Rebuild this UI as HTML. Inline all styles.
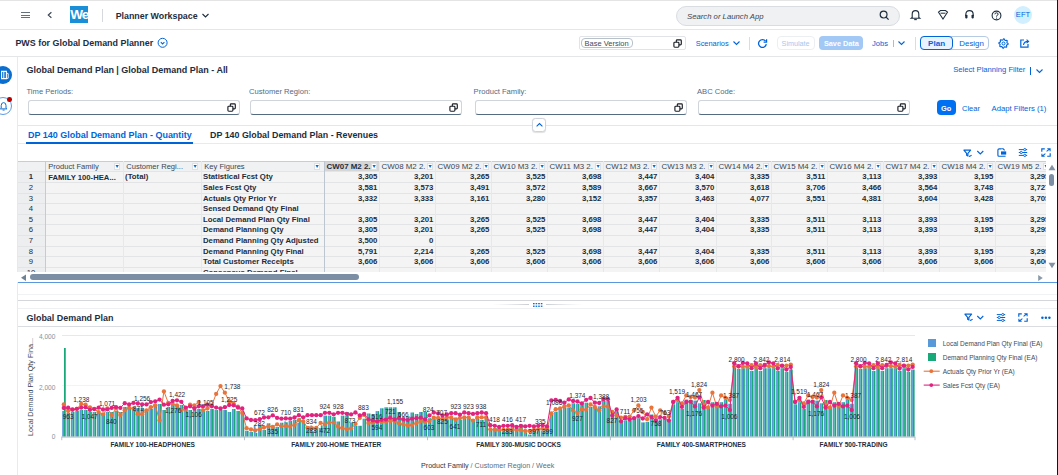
<!DOCTYPE html>
<html><head><meta charset="utf-8"><style>
html,body{margin:0;padding:0;}
body{width:1058px;height:475px;overflow:hidden;position:relative;background:#fff;font-family:"Liberation Sans", sans-serif;}
.t{position:absolute;white-space:nowrap;font-family:"Liberation Sans", sans-serif;}
svg{overflow:visible}
</style></head><body>
<div style="position:absolute;left:0px;top:0px;width:1058px;height:1px;background:#e4e4e4"></div>
<div style="position:absolute;left:0px;top:29px;width:1058px;height:1px;background:#e4e6e8"></div>
<div style="position:absolute;left:21px;top:11.8px;width:8.8px;height:1.2px;background:#66707b"></div>
<div style="position:absolute;left:21px;top:14.6px;width:8.8px;height:1.2px;background:#66707b"></div>
<div style="position:absolute;left:21px;top:17.3px;width:8.8px;height:1.2px;background:#66707b"></div>
<svg style="position:absolute;left:46px;top:11px;" width="8" height="9" viewBox="0 0 8 9"><path d="M5.4 1.3 L2.3 4.1 L5.4 6.8" fill="none" stroke="#3c4652" stroke-width="1.2"/></svg>
<div style="position:absolute;left:70px;top:6px;width:18px;height:17px;background:#1a8fd8;overflow:hidden"><div class="t" style="left:0.3px;top:0px;font-size:13.5px;line-height:17px;color:#fff;letter-spacing:-1px;font-weight:bold">We</div></div>
<div style="position:absolute;left:102px;top:8.5px;width:1px;height:13px;background:#d5d8dc"></div>
<div class="t" style="left:115.7px;top:9.80px;font-size:8.85px;line-height:12.39px;color:#1d2d3e;font-weight:bold;font-style:normal;">Planner Workspace</div>
<svg style="position:absolute;left:201px;top:12px;" width="9" height="7" viewBox="0 0 9 7"><path d="M1.5 2 L4.5 5 L7.5 2" fill="none" stroke="#1d2d3e" stroke-width="1.1"/></svg>
<div style="position:absolute;left:676px;top:6px;width:224px;height:19.5px;background:#eff1f2;border:1px solid #d9dde1;border-radius:10px;box-sizing:border-box"></div>
<div class="t" style="left:687px;top:11.69px;font-size:7.73px;line-height:10.82px;color:#3a4756;font-weight:normal;font-style:italic;">Search or Launch App</div>
<svg style="position:absolute;left:879px;top:10px;" width="11" height="11" viewBox="0 0 11 11"><circle cx="4.6" cy="4.6" r="3.4" fill="none" stroke="#1d2d3e" stroke-width="1.2"/><path d="M7.1 7.1 L9.6 9.6" stroke="#1d2d3e" stroke-width="1.3"/></svg>
<svg style="position:absolute;left:910px;top:9px;" width="11" height="12" viewBox="0 0 11 12"><path d="M2.2 8.5 L2.2 5.2 Q2.2 1.6 5.5 1.6 Q8.8 1.6 8.8 5.2 L8.8 8.5 L9.8 9.3 L1.2 9.3 Z" fill="none" stroke="#1d2d3e" stroke-width="1.1"/><path d="M4.2 10.6 L6.8 10.6" stroke="#1d2d3e" stroke-width="1.1"/></svg>
<svg style="position:absolute;left:937px;top:9px;" width="12" height="12" viewBox="0 0 12 12"><path d="M1.5 3.2 L3.5 1.5 L8.5 1.5 L10.5 3.2 L6 10 Z" fill="none" stroke="#1d2d3e" stroke-width="1.1"/><path d="M3.5 4.2 L8.5 4.2" stroke="#1d2d3e" stroke-width="1"/></svg>
<svg style="position:absolute;left:964px;top:9px;" width="11" height="12" viewBox="0 0 11 12"><path d="M1.8 7 L1.8 5.5 Q1.8 1.6 5.5 1.6 Q9.2 1.6 9.2 5.5 L9.2 7" fill="none" stroke="#1d2d3e" stroke-width="1.1"/><rect x="1.2" y="5.8" width="2.3" height="3.6" rx="0.8" fill="#1d2d3e"/><rect x="7.5" y="5.8" width="2.3" height="3.6" rx="0.8" fill="#1d2d3e"/></svg>
<svg style="position:absolute;left:990.5px;top:9.5px;" width="11" height="11" viewBox="0 0 11 11"><circle cx="5.5" cy="5.5" r="4.4" fill="none" stroke="#1d2d3e" stroke-width="1.1"/><path d="M3.9 4.3 Q3.9 2.8 5.5 2.8 Q7.1 2.8 7.1 4.2 Q7.1 5.2 5.6 5.8 L5.6 6.6" fill="none" stroke="#1d2d3e" stroke-width="1"/><circle cx="5.6" cy="8.1" r="0.6" fill="#1d2d3e"/></svg>
<div style="position:absolute;left:1014px;top:6px;width:18px;height:18px;background:#d1efff;border-radius:50%"></div>
<div class="t" style="left:1023px;transform:translateX(-50%);top:10.48px;font-size:7.6px;line-height:10.64px;color:#0064d9;font-weight:normal;font-style:normal;">EFT</div>
<div style="position:absolute;left:0px;top:56px;width:1058px;height:1px;background:#e4e6e8"></div>
<div class="t" style="left:15.4px;top:37.05px;font-size:8.93px;line-height:12.50px;color:#1d2d3e;font-weight:bold;font-style:normal;">PWS for Global Demand Planner</div>
<svg style="position:absolute;left:157px;top:37px;" width="12" height="12" viewBox="0 0 12 12"><circle cx="5.6" cy="5.8" r="4.5" fill="none" stroke="#0064d9" stroke-width="1"/><path d="M3.8 5.2 L5.6 6.9 L7.4 5.2" fill="none" stroke="#0064d9" stroke-width="1.1"/></svg>
<div style="position:absolute;left:579px;top:36.3px;width:106.7px;height:13.5px;background:#fff;border:1px solid #e0e4e8;border-radius:2px;box-sizing:border-box"></div>
<div style="position:absolute;left:581.3px;top:38px;width:52px;height:10px;background:#fff;border:1px solid #b8c0c8;border-radius:4px;box-sizing:border-box"></div>
<div class="t" style="left:584.6px;top:38.97px;font-size:7.47px;line-height:10.46px;color:#3b4c5c;font-weight:normal;font-style:normal;">Base Version</div>
<svg style="position:absolute;left:672.8px;top:38.6px;" width="10" height="10" viewBox="0 0 10 10"><rect x="3.3" y="0.9" width="5" height="5" rx="0.9" fill="none" stroke="#1a1f26" stroke-width="1.15"/><rect x="0.9" y="3.2" width="5" height="5" rx="0.9" fill="#fff" stroke="#1a1f26" stroke-width="1.15"/></svg>
<div class="t" style="left:695.7px;top:39.01px;font-size:7.42px;line-height:10.39px;color:#0064d9;font-weight:normal;font-style:normal;">Scenarios</div>
<svg style="position:absolute;left:732px;top:39px;" width="9" height="8" viewBox="0 0 9 8"><path d="M1.5 2.5 L4.5 5.5 L7.5 2.5" fill="none" stroke="#0064d9" stroke-width="1.1"/></svg>
<div style="position:absolute;left:748.5px;top:36.5px;width:1px;height:13px;background:#d9dde1"></div>
<svg style="position:absolute;left:757px;top:37.5px;" width="11" height="11" viewBox="0 0 11 11"><path d="M8.6 3.2 A3.9 3.9 0 1 0 9.3 6.2" fill="none" stroke="#0064d9" stroke-width="1.3"/><path d="M9.6 1.2 L9.6 4.2 L6.6 4.2" fill="none" stroke="#0064d9" stroke-width="1.2"/></svg>
<div style="position:absolute;left:776.8px;top:36.2px;width:37.8px;height:13.6px;border:1px solid #eceff2;border-radius:4px;box-sizing:border-box"></div>
<div class="t" style="left:781.6px;top:39.16px;font-size:7.2px;line-height:10.08px;color:#a8c7ee;font-weight:normal;font-style:normal;">Simulate</div>
<div style="position:absolute;left:819.4px;top:36.2px;width:44px;height:13.6px;background:#a2c8f6;border-radius:4px"></div>
<div class="t" style="left:841.4px;transform:translateX(-50%);top:39.08px;font-size:7.32px;line-height:10.25px;color:#fff;font-weight:bold;font-style:normal;">Save Data</div>
<div class="t" style="left:872px;top:38.90px;font-size:7.57px;line-height:10.60px;color:#0064d9;font-weight:normal;font-style:normal;">Jobs</div>
<div style="position:absolute;left:892.8px;top:39.5px;width:0.8px;height:7px;background:#9fbfe8"></div>
<svg style="position:absolute;left:897px;top:39px;" width="9" height="8" viewBox="0 0 9 8"><path d="M1.5 2.5 L4.5 5.5 L7.5 2.5" fill="none" stroke="#0064d9" stroke-width="1.1"/></svg>
<div style="position:absolute;left:914.7px;top:36.5px;width:1px;height:13px;background:#d9dde1"></div>
<div style="position:absolute;left:919.7px;top:36px;width:69.6px;height:14px;border:1px solid #b5cbe3;border-radius:4px;box-sizing:border-box"></div>
<div style="position:absolute;left:919.7px;top:36px;width:33.8px;height:14px;background:#e8f2ff;border:1px solid #0064d9;border-radius:4px;box-sizing:border-box"></div>
<div class="t" style="left:936.6px;transform:translateX(-50%);top:37.87px;font-size:8.05px;line-height:11.27px;color:#0064d9;font-weight:bold;font-style:normal;">Plan</div>
<div class="t" style="left:971.6px;transform:translateX(-50%);top:37.97px;font-size:7.9px;line-height:11.06px;color:#0064d9;font-weight:normal;font-style:normal;">Design</div>
<svg style="position:absolute;left:998px;top:37.5px;" width="11" height="11" viewBox="0 0 11 11"><path d="M5.50 0.90 L6.40 0.99 L6.88 2.17 L7.50 2.51 L8.75 2.25 L9.32 2.94 L8.83 4.12 L9.03 4.80 L10.10 5.50 L10.01 6.40 L8.83 6.88 L8.49 7.50 L8.75 8.75 L8.06 9.32 L6.88 8.83 L6.20 9.03 L5.50 10.10 L4.60 10.01 L4.12 8.83 L3.50 8.49 L2.25 8.75 L1.68 8.06 L2.17 6.88 L1.97 6.20 L0.90 5.50 L0.99 4.60 L2.17 4.12 L2.51 3.50 L2.25 2.25 L2.94 1.68 L4.12 2.17 L4.80 1.97 Z" fill="none" stroke="#0064d9" stroke-width="1.1" stroke-linejoin="round"/><circle cx="5.5" cy="5.5" r="1.5" fill="none" stroke="#0064d9" stroke-width="1"/></svg>
<svg style="position:absolute;left:1019px;top:37.5px;" width="11" height="11" viewBox="0 0 11 11"><path d="M5 2 L1.8 2 L1.8 9.2 L9 9.2 L9 6" fill="none" stroke="#0064d9" stroke-width="1.2"/><path d="M4.5 7 Q5 3.5 9.2 3.4" fill="none" stroke="#0064d9" stroke-width="1.1"/><path d="M7.6 1.6 L9.6 3.4 L7.6 5.2" fill="none" stroke="#0064d9" stroke-width="1.1"/></svg>
<div style="position:absolute;left:16.8px;top:57px;width:0.8px;height:418px;background:#e9eaeb"></div>
<div style="position:absolute;left:-6px;top:66.1px;width:18.2px;height:18.2px;background:#0a6ed1;border-radius:50%"></div>
<svg style="position:absolute;left:0px;top:70px;" width="10" height="10" viewBox="0 0 10 10"><path d="M1.6 1.4 L6.4 1.4 L6.4 8.6 L1.6 8.6 Z" fill="none" stroke="#fff" stroke-width="1.1"/><path d="M3.8 1.6 L3.8 8.4" stroke="#fff" stroke-width="1"/><path d="M6.4 3 L8.2 3.6 L8.2 8.2 L6.4 8.6" fill="none" stroke="#fff" stroke-width="0.9"/></svg>
<div style="position:absolute;left:-6px;top:97px;width:18.2px;height:18.2px;background:#fff;border:1px solid #5a9be6;border-radius:50%;box-sizing:border-box"></div>
<svg style="position:absolute;left:-1px;top:101px;" width="10" height="10" viewBox="0 0 10 10"><path d="M2.2 7.2 L2.2 4.6 Q2.2 1.6 4.6 1.6 Q7 1.6 7 4.6 L7 7.2 L7.8 7.9 L1.4 7.9 Z" fill="none" stroke="#0a6ed1" stroke-width="1"/><path d="M3.6 9.1 L5.6 9.1" stroke="#0a6ed1" stroke-width="0.9"/></svg>
<div style="position:absolute;left:7.1px;top:97.4px;width:4.6px;height:4.6px;background:#bb0000;border-radius:50%"></div>
<div class="t" style="left:26.5px;top:64.01px;font-size:8.99px;line-height:12.59px;color:#1d2d3e;font-weight:bold;font-style:normal;">Global Demand Plan | Global Demand Plan - All</div>
<div class="t" style="left:953.2px;top:65.44px;font-size:7.65px;line-height:10.71px;color:#0064d9;font-weight:normal;font-style:normal;">Select Planning Filter</div>
<div style="position:absolute;left:1029.5px;top:66.5px;width:0.9px;height:8px;background:#0064d9"></div>
<svg style="position:absolute;left:1035px;top:66.5px;" width="9" height="8" viewBox="0 0 9 8"><path d="M1.5 2.5 L4.5 5.5 L7.5 2.5" fill="none" stroke="#0064d9" stroke-width="1.1"/></svg>
<div class="t" style="left:26.5px;top:87.37px;font-size:7.62px;line-height:10.67px;color:#556b82;font-weight:normal;font-style:normal;">Time Periods:</div>
<div style="position:absolute;left:27.5px;top:100.2px;width:212px;height:14.8px;background:#fff;border:1px solid #cfd5db;border-bottom:1px solid #556b81;border-radius:3px;box-sizing:border-box"></div>
<svg style="position:absolute;left:226.5px;top:103.2px;" width="10" height="10" viewBox="0 0 10 10"><rect x="3.3" y="0.9" width="5" height="5" rx="0.9" fill="none" stroke="#1a1f26" stroke-width="1.15"/><rect x="0.9" y="3.2" width="5" height="5" rx="0.9" fill="#fff" stroke="#1a1f26" stroke-width="1.15"/></svg>
<div class="t" style="left:249px;top:87.37px;font-size:7.62px;line-height:10.67px;color:#556b82;font-weight:normal;font-style:normal;">Customer Region:</div>
<div style="position:absolute;left:250px;top:100.2px;width:212px;height:14.8px;background:#fff;border:1px solid #cfd5db;border-bottom:1px solid #556b81;border-radius:3px;box-sizing:border-box"></div>
<svg style="position:absolute;left:449px;top:103.2px;" width="10" height="10" viewBox="0 0 10 10"><rect x="3.3" y="0.9" width="5" height="5" rx="0.9" fill="none" stroke="#1a1f26" stroke-width="1.15"/><rect x="0.9" y="3.2" width="5" height="5" rx="0.9" fill="#fff" stroke="#1a1f26" stroke-width="1.15"/></svg>
<div class="t" style="left:473.6px;top:87.37px;font-size:7.62px;line-height:10.67px;color:#556b82;font-weight:normal;font-style:normal;">Product Family:</div>
<div style="position:absolute;left:474.6px;top:100.2px;width:212px;height:14.8px;background:#fff;border:1px solid #cfd5db;border-bottom:1px solid #556b81;border-radius:3px;box-sizing:border-box"></div>
<svg style="position:absolute;left:673.6px;top:103.2px;" width="10" height="10" viewBox="0 0 10 10"><rect x="3.3" y="0.9" width="5" height="5" rx="0.9" fill="none" stroke="#1a1f26" stroke-width="1.15"/><rect x="0.9" y="3.2" width="5" height="5" rx="0.9" fill="#fff" stroke="#1a1f26" stroke-width="1.15"/></svg>
<div class="t" style="left:697px;top:87.37px;font-size:7.62px;line-height:10.67px;color:#556b82;font-weight:normal;font-style:normal;">ABC Code:</div>
<div style="position:absolute;left:698px;top:100.2px;width:212px;height:14.8px;background:#fff;border:1px solid #cfd5db;border-bottom:1px solid #556b81;border-radius:3px;box-sizing:border-box"></div>
<svg style="position:absolute;left:897px;top:103.2px;" width="10" height="10" viewBox="0 0 10 10"><rect x="3.3" y="0.9" width="5" height="5" rx="0.9" fill="none" stroke="#1a1f26" stroke-width="1.15"/><rect x="0.9" y="3.2" width="5" height="5" rx="0.9" fill="#fff" stroke="#1a1f26" stroke-width="1.15"/></svg>
<div style="position:absolute;left:936.5px;top:100.2px;width:19.3px;height:14.8px;background:#0070f2;border-radius:4px"></div>
<div class="t" style="left:946.1px;transform:translateX(-50%);top:103.62px;font-size:7.4px;line-height:10.36px;color:#fff;font-weight:bold;font-style:normal;">Go</div>
<div class="t" style="left:962px;top:103.83px;font-size:7.53px;line-height:10.54px;color:#0064d9;font-weight:normal;font-style:normal;">Clear</div>
<div class="t" style="left:991.5px;top:104.09px;font-size:7.73px;line-height:10.82px;color:#0064d9;font-weight:normal;font-style:normal;">Adapt Filters (1)</div>
<div style="position:absolute;left:17.6px;top:125px;width:1040px;height:1px;background:#e4e6e8"></div>
<div style="position:absolute;left:532.4px;top:118px;width:13.5px;height:13.5px;background:#fff;border:1px solid #cdd3da;border-radius:3.5px;box-sizing:border-box;box-shadow:0 0.5px 1px rgba(0,0,0,0.12)"></div>
<svg style="position:absolute;left:534.7px;top:121.2px;" width="9" height="8" viewBox="0 0 9 8"><path d="M1.6 5.3 L4.5 2.6 L7.4 5.3" fill="none" stroke="#0064d9" stroke-width="1.1"/></svg>
<div class="t" style="left:28px;top:128.71px;font-size:8.98px;line-height:12.57px;color:#0064d9;font-weight:bold;font-style:normal;">DP 140 Global Demand Plan - Quantity</div>
<div class="t" style="left:210px;top:128.77px;font-size:8.9px;line-height:12.46px;color:#1d2d3e;font-weight:bold;font-style:normal;">DP 140 Global Demand Plan - Revenues</div>
<div style="position:absolute;left:17.6px;top:143px;width:1040px;height:1px;background:#e8eaec"></div>
<div style="position:absolute;left:26.1px;top:141.8px;width:167px;height:2px;background:#0064d9"></div>
<svg style="position:absolute;left:962.5px;top:148.5px;" width="11" height="9" viewBox="0 0 11 9"><path d="M0.9 1.1 L7.6 1.1 L4.9 4.3 L4.9 6.9 L3.6 6.2 L3.6 4.3 Z" fill="none" stroke="#0064d9" stroke-width="1.15" stroke-linejoin="round"/><path d="M5.9 7.3 Q7 7.6 8.6 6.1" fill="none" stroke="#0064d9" stroke-width="1.1"/></svg>
<svg style="position:absolute;left:975.5px;top:148.5px;" width="9" height="7" viewBox="0 0 9 7"><path d="M1.3 2 L4.3 5 L7.3 2" fill="none" stroke="#0064d9" stroke-width="1.1"/></svg>
<svg style="position:absolute;left:996.5px;top:148px;" width="10" height="9" viewBox="0 0 10 9"><path d="M4.2 0.8 L2.2 0.8 Q0.9 0.8 0.9 2.1 L0.9 7.2 Q0.9 8.2 1.9 8.2 L8.6 8.2" fill="none" stroke="#0064d9" stroke-width="1.15"/><path d="M4.2 0.8 L6.2 0.8 L7.6 2.4" fill="none" stroke="#0064d9" stroke-width="1.1"/><rect x="4" y="3.4" width="5.2" height="3.2" fill="#0064d9"/></svg>
<svg style="position:absolute;left:1018.4px;top:148px;" width="10" height="9" viewBox="0 0 10 9"><path d="M0.8 1.6 L9.2 1.6 M0.8 4.5 L9.2 4.5 M0.8 7.4 L9.2 7.4" stroke="#0064d9" stroke-width="1"/><circle cx="6.8" cy="1.6" r="1.15" fill="#fff" stroke="#0064d9" stroke-width="0.9"/><circle cx="3.2" cy="4.5" r="1.15" fill="#fff" stroke="#0064d9" stroke-width="0.9"/><circle cx="6.8" cy="7.4" r="1.15" fill="#fff" stroke="#0064d9" stroke-width="0.9"/></svg>
<svg style="position:absolute;left:1040.8px;top:148px;" width="10" height="9" viewBox="0 0 10 9"><path d="M0.8 3.8 L0.8 0.8 L3.8 0.8 M9.2 5.2 L9.2 8.2 L6.2 8.2" fill="none" stroke="#0064d9" stroke-width="1.15"/><path d="M5.6 3.4 L8.8 0.8 M6.3 0.8 L9.1 0.8 L9.1 3.3 M4.4 5.6 L1.2 8.2 M3.7 8.2 L0.9 8.2 L0.9 5.7" fill="none" stroke="#0064d9" stroke-width="1.05"/></svg>
<div style="position:absolute;left:17px;top:161.2px;width:1029.00px;height:111.00px;overflow:hidden;background:#f4f4f4">
<div style="position:absolute;left:0.00px;top:0.00px;width:1029.00px;height:10.80px;background:#eff1f3"></div>
<div style="position:absolute;left:307.00px;top:0.00px;width:55.92px;height:10.80px;background:#d6d6d6"></div>
<div style="position:absolute;left:0.00px;top:10.80px;width:27.90px;height:200.00px;background:#eceef0"></div>
<div style="position:absolute;left:0.00px;top:0.00px;width:1029.00px;height:0.90px;background:#c9cdd1"></div>
<div style="position:absolute;left:0.00px;top:10.30px;width:1029.00px;height:0.90px;background:#e2e4e6"></div>
<div style="position:absolute;left:0.00px;top:20.90px;width:1029.00px;height:0.90px;background:#e2e4e6"></div>
<div style="position:absolute;left:0.00px;top:31.50px;width:1029.00px;height:0.90px;background:#e2e4e6"></div>
<div style="position:absolute;left:0.00px;top:42.10px;width:1029.00px;height:0.90px;background:#e2e4e6"></div>
<div style="position:absolute;left:0.00px;top:52.70px;width:1029.00px;height:0.90px;background:#e2e4e6"></div>
<div style="position:absolute;left:0.00px;top:63.30px;width:1029.00px;height:0.90px;background:#e2e4e6"></div>
<div style="position:absolute;left:0.00px;top:73.90px;width:1029.00px;height:0.90px;background:#e2e4e6"></div>
<div style="position:absolute;left:0.00px;top:84.50px;width:1029.00px;height:0.90px;background:#e2e4e6"></div>
<div style="position:absolute;left:0.00px;top:95.10px;width:1029.00px;height:0.90px;background:#e2e4e6"></div>
<div style="position:absolute;left:0.00px;top:105.70px;width:1029.00px;height:0.90px;background:#e2e4e6"></div>
<div style="position:absolute;left:0.00px;top:116.30px;width:1029.00px;height:0.90px;background:#e2e4e6"></div>
<div style="position:absolute;left:0.00px;top:0.00px;width:27.90px;height:0.90px;background:#c9cdd1"></div>
<div style="position:absolute;left:0.00px;top:0.00px;width:1.00px;height:200.00px;background:#e6e8ea"></div>
<div style="position:absolute;left:28.00px;top:0.00px;width:1.00px;height:200.00px;background:#c3ccd5"></div>
<div style="position:absolute;left:106.00px;top:0.00px;width:1.00px;height:200.00px;background:#e6e8ea"></div>
<div style="position:absolute;left:184.00px;top:0.00px;width:1.00px;height:200.00px;background:#e6e8ea"></div>
<div style="position:absolute;left:307.00px;top:0.00px;width:1.00px;height:200.00px;background:#bcc6d0"></div>
<div style="position:absolute;left:362.00px;top:0.00px;width:1.00px;height:200.00px;background:#e6e8ea"></div>
<div style="position:absolute;left:418.00px;top:0.00px;width:1.00px;height:200.00px;background:#e6e8ea"></div>
<div style="position:absolute;left:474.00px;top:0.00px;width:1.00px;height:200.00px;background:#e6e8ea"></div>
<div style="position:absolute;left:530.00px;top:0.00px;width:1.00px;height:200.00px;background:#e6e8ea"></div>
<div style="position:absolute;left:586.00px;top:0.00px;width:1.00px;height:200.00px;background:#e6e8ea"></div>
<div style="position:absolute;left:642.00px;top:0.00px;width:1.00px;height:200.00px;background:#e6e8ea"></div>
<div style="position:absolute;left:699.00px;top:0.00px;width:1.00px;height:200.00px;background:#e6e8ea"></div>
<div style="position:absolute;left:754.00px;top:0.00px;width:1.00px;height:200.00px;background:#e6e8ea"></div>
<div style="position:absolute;left:810.00px;top:0.00px;width:1.00px;height:200.00px;background:#e6e8ea"></div>
<div style="position:absolute;left:866.00px;top:0.00px;width:1.00px;height:200.00px;background:#e6e8ea"></div>
<div style="position:absolute;left:922.00px;top:0.00px;width:1.00px;height:200.00px;background:#e6e8ea"></div>
<div style="position:absolute;left:978.00px;top:0.00px;width:1.00px;height:200.00px;background:#e6e8ea"></div>
<div style="position:absolute;left:1034.00px;top:0.00px;width:1.00px;height:200.00px;background:#e6e8ea"></div>
<div class="t" style="left:31.30px;top:0.50px;font-size:7.57px;line-height:10.60px;color:#3a4654;font-weight:normal;">Product Family</div>
<div class="t" style="left:109.30px;top:0.50px;font-size:7.57px;line-height:10.60px;color:#3a4654;font-weight:normal;">Customer Regi...</div>
<div class="t" style="left:187.30px;top:0.50px;font-size:7.57px;line-height:10.60px;color:#3a4654;font-weight:normal;">Key Figures</div>
<div class="t" style="left:309.60px;top:0.26px;font-size:7.92px;line-height:11.09px;color:#1d2d3e;font-weight:bold;">CW07 M2 2.</div>
<div class="t" style="left:364.60px;top:0.26px;font-size:7.92px;line-height:11.09px;color:#3a4654;font-weight:normal;">CW08 M2 2.</div>
<div class="t" style="left:420.60px;top:0.26px;font-size:7.92px;line-height:11.09px;color:#3a4654;font-weight:normal;">CW09 M2 2.</div>
<div class="t" style="left:476.60px;top:0.26px;font-size:7.92px;line-height:11.09px;color:#3a4654;font-weight:normal;">CW10 M3 2.</div>
<div class="t" style="left:532.60px;top:0.26px;font-size:7.92px;line-height:11.09px;color:#3a4654;font-weight:normal;">CW11 M3 2.</div>
<div class="t" style="left:588.60px;top:0.26px;font-size:7.92px;line-height:11.09px;color:#3a4654;font-weight:normal;">CW12 M3 2.</div>
<div class="t" style="left:644.60px;top:0.26px;font-size:7.92px;line-height:11.09px;color:#3a4654;font-weight:normal;">CW13 M3 2.</div>
<div class="t" style="left:701.60px;top:0.26px;font-size:7.92px;line-height:11.09px;color:#3a4654;font-weight:normal;">CW14 M4 2.</div>
<div class="t" style="left:756.60px;top:0.26px;font-size:7.92px;line-height:11.09px;color:#3a4654;font-weight:normal;">CW15 M4 2.</div>
<div class="t" style="left:812.60px;top:0.26px;font-size:7.92px;line-height:11.09px;color:#3a4654;font-weight:normal;">CW16 M4 2.</div>
<div class="t" style="left:868.60px;top:0.26px;font-size:7.92px;line-height:11.09px;color:#3a4654;font-weight:normal;">CW17 M4 2.</div>
<div class="t" style="left:924.60px;top:0.26px;font-size:7.92px;line-height:11.09px;color:#3a4654;font-weight:normal;">CW18 M4 2.</div>
<div class="t" style="left:980.60px;top:0.26px;font-size:7.92px;line-height:11.09px;color:#3a4654;font-weight:normal;">CW19 M5 2.</div>
<div style="position:absolute;left:96.70px;top:2.30px;width:6.30px;height:6.30px;background:#fff;border:0.5px solid #dde1e5;box-sizing:border-box"></div>
<svg style="position:absolute;left:96.70px;top:2.3px" width="6.3" height="6.3" viewBox="0 0 6.3 6.3"><path d="M1.5 2.1 L4.8 2.1 L3.15 5.0 Z" fill="#0a6ed1"/></svg>
<div style="position:absolute;left:174.70px;top:2.30px;width:6.30px;height:6.30px;background:#fff;border:0.5px solid #dde1e5;box-sizing:border-box"></div>
<svg style="position:absolute;left:174.70px;top:2.3px" width="6.3" height="6.3" viewBox="0 0 6.3 6.3"><path d="M1.5 2.1 L4.8 2.1 L3.15 5.0 Z" fill="#0a6ed1"/></svg>
<div style="position:absolute;left:297.20px;top:2.30px;width:6.30px;height:6.30px;background:#fff;border:0.5px solid #dde1e5;box-sizing:border-box"></div>
<svg style="position:absolute;left:297.20px;top:2.3px" width="6.3" height="6.3" viewBox="0 0 6.3 6.3"><path d="M1.5 2.1 L4.8 2.1 L3.15 5.0 Z" fill="#0a6ed1"/></svg>
<div style="position:absolute;left:353.70px;top:2.30px;width:6.30px;height:6.30px;background:#fff;border:0.5px solid #dde1e5;box-sizing:border-box"></div>
<svg style="position:absolute;left:353.70px;top:2.3px" width="6.3" height="6.3" viewBox="0 0 6.3 6.3"><path d="M1.5 2.1 L4.8 2.1 L3.15 5.0 Z" fill="#0a6ed1"/></svg>
<div style="position:absolute;left:409.70px;top:2.30px;width:6.30px;height:6.30px;background:#fff;border:0.5px solid #dde1e5;box-sizing:border-box"></div>
<svg style="position:absolute;left:409.70px;top:2.3px" width="6.3" height="6.3" viewBox="0 0 6.3 6.3"><path d="M1.5 2.1 L4.8 2.1 L3.15 5.0 Z" fill="#0a6ed1"/></svg>
<div style="position:absolute;left:465.70px;top:2.30px;width:6.30px;height:6.30px;background:#fff;border:0.5px solid #dde1e5;box-sizing:border-box"></div>
<svg style="position:absolute;left:465.70px;top:2.3px" width="6.3" height="6.3" viewBox="0 0 6.3 6.3"><path d="M1.5 2.1 L4.8 2.1 L3.15 5.0 Z" fill="#0a6ed1"/></svg>
<div style="position:absolute;left:521.70px;top:2.30px;width:6.30px;height:6.30px;background:#fff;border:0.5px solid #dde1e5;box-sizing:border-box"></div>
<svg style="position:absolute;left:521.70px;top:2.3px" width="6.3" height="6.3" viewBox="0 0 6.3 6.3"><path d="M1.5 2.1 L4.8 2.1 L3.15 5.0 Z" fill="#0a6ed1"/></svg>
<div style="position:absolute;left:577.70px;top:2.30px;width:6.30px;height:6.30px;background:#fff;border:0.5px solid #dde1e5;box-sizing:border-box"></div>
<svg style="position:absolute;left:577.70px;top:2.3px" width="6.3" height="6.3" viewBox="0 0 6.3 6.3"><path d="M1.5 2.1 L4.8 2.1 L3.15 5.0 Z" fill="#0a6ed1"/></svg>
<div style="position:absolute;left:633.70px;top:2.30px;width:6.30px;height:6.30px;background:#fff;border:0.5px solid #dde1e5;box-sizing:border-box"></div>
<svg style="position:absolute;left:633.70px;top:2.3px" width="6.3" height="6.3" viewBox="0 0 6.3 6.3"><path d="M1.5 2.1 L4.8 2.1 L3.15 5.0 Z" fill="#0a6ed1"/></svg>
<div style="position:absolute;left:690.70px;top:2.30px;width:6.30px;height:6.30px;background:#fff;border:0.5px solid #dde1e5;box-sizing:border-box"></div>
<svg style="position:absolute;left:690.70px;top:2.3px" width="6.3" height="6.3" viewBox="0 0 6.3 6.3"><path d="M1.5 2.1 L4.8 2.1 L3.15 5.0 Z" fill="#0a6ed1"/></svg>
<div style="position:absolute;left:745.70px;top:2.30px;width:6.30px;height:6.30px;background:#fff;border:0.5px solid #dde1e5;box-sizing:border-box"></div>
<svg style="position:absolute;left:745.70px;top:2.3px" width="6.3" height="6.3" viewBox="0 0 6.3 6.3"><path d="M1.5 2.1 L4.8 2.1 L3.15 5.0 Z" fill="#0a6ed1"/></svg>
<div style="position:absolute;left:801.70px;top:2.30px;width:6.30px;height:6.30px;background:#fff;border:0.5px solid #dde1e5;box-sizing:border-box"></div>
<svg style="position:absolute;left:801.70px;top:2.3px" width="6.3" height="6.3" viewBox="0 0 6.3 6.3"><path d="M1.5 2.1 L4.8 2.1 L3.15 5.0 Z" fill="#0a6ed1"/></svg>
<div style="position:absolute;left:857.70px;top:2.30px;width:6.30px;height:6.30px;background:#fff;border:0.5px solid #dde1e5;box-sizing:border-box"></div>
<svg style="position:absolute;left:857.70px;top:2.3px" width="6.3" height="6.3" viewBox="0 0 6.3 6.3"><path d="M1.5 2.1 L4.8 2.1 L3.15 5.0 Z" fill="#0a6ed1"/></svg>
<div style="position:absolute;left:913.70px;top:2.30px;width:6.30px;height:6.30px;background:#fff;border:0.5px solid #dde1e5;box-sizing:border-box"></div>
<svg style="position:absolute;left:913.70px;top:2.3px" width="6.3" height="6.3" viewBox="0 0 6.3 6.3"><path d="M1.5 2.1 L4.8 2.1 L3.15 5.0 Z" fill="#0a6ed1"/></svg>
<div style="position:absolute;left:969.70px;top:2.30px;width:6.30px;height:6.30px;background:#fff;border:0.5px solid #dde1e5;box-sizing:border-box"></div>
<svg style="position:absolute;left:969.70px;top:2.3px" width="6.3" height="6.3" viewBox="0 0 6.3 6.3"><path d="M1.5 2.1 L4.8 2.1 L3.15 5.0 Z" fill="#0a6ed1"/></svg>
<div style="position:absolute;left:1025.70px;top:2.30px;width:6.30px;height:6.30px;background:#fff;border:0.5px solid #dde1e5;box-sizing:border-box"></div>
<svg style="position:absolute;left:1025.70px;top:2.3px" width="6.3" height="6.3" viewBox="0 0 6.3 6.3"><path d="M1.5 2.1 L4.8 2.1 L3.15 5.0 Z" fill="#0a6ed1"/></svg>
<div class="t" style="left:-136.00px;width:300px;text-align:center;top:11.31px;font-size:7.7px;line-height:10.78px;color:#1d2d3e;font-weight:bold;">1</div>
<div class="t" style="left:186.00px;top:11.28px;font-size:7.75px;line-height:10.85px;color:#1d2d3e;font-weight:bold;">Statistical Fcst Qty</div>
<div class="t" style="left:60.40px;width:300px;text-align:right;top:11.25px;font-size:7.79px;line-height:10.91px;color:#1d2d3e;font-weight:bold;">3,305</div>
<div class="t" style="left:116.40px;width:300px;text-align:right;top:11.25px;font-size:7.79px;line-height:10.91px;color:#1d2d3e;font-weight:bold;">3,201</div>
<div class="t" style="left:172.40px;width:300px;text-align:right;top:11.25px;font-size:7.79px;line-height:10.91px;color:#1d2d3e;font-weight:bold;">3,265</div>
<div class="t" style="left:228.40px;width:300px;text-align:right;top:11.25px;font-size:7.79px;line-height:10.91px;color:#1d2d3e;font-weight:bold;">3,525</div>
<div class="t" style="left:284.40px;width:300px;text-align:right;top:11.25px;font-size:7.79px;line-height:10.91px;color:#1d2d3e;font-weight:bold;">3,698</div>
<div class="t" style="left:340.40px;width:300px;text-align:right;top:11.25px;font-size:7.79px;line-height:10.91px;color:#1d2d3e;font-weight:bold;">3,447</div>
<div class="t" style="left:397.40px;width:300px;text-align:right;top:11.25px;font-size:7.79px;line-height:10.91px;color:#1d2d3e;font-weight:bold;">3,404</div>
<div class="t" style="left:452.40px;width:300px;text-align:right;top:11.25px;font-size:7.79px;line-height:10.91px;color:#1d2d3e;font-weight:bold;">3,335</div>
<div class="t" style="left:508.40px;width:300px;text-align:right;top:11.25px;font-size:7.79px;line-height:10.91px;color:#1d2d3e;font-weight:bold;">3,511</div>
<div class="t" style="left:564.40px;width:300px;text-align:right;top:11.25px;font-size:7.79px;line-height:10.91px;color:#1d2d3e;font-weight:bold;">3,113</div>
<div class="t" style="left:620.40px;width:300px;text-align:right;top:11.25px;font-size:7.79px;line-height:10.91px;color:#1d2d3e;font-weight:bold;">3,393</div>
<div class="t" style="left:676.40px;width:300px;text-align:right;top:11.25px;font-size:7.79px;line-height:10.91px;color:#1d2d3e;font-weight:bold;">3,195</div>
<div class="t" style="left:732.40px;width:300px;text-align:right;top:11.25px;font-size:7.79px;line-height:10.91px;color:#1d2d3e;font-weight:bold;">3,295</div>
<div class="t" style="left:-136.00px;width:300px;text-align:center;top:21.91px;font-size:7.7px;line-height:10.78px;color:#1d2d3e;font-weight:normal;">2</div>
<div class="t" style="left:186.00px;top:21.88px;font-size:7.75px;line-height:10.85px;color:#1d2d3e;font-weight:bold;">Sales Fcst Qty</div>
<div class="t" style="left:60.40px;width:300px;text-align:right;top:21.85px;font-size:7.79px;line-height:10.91px;color:#1d2d3e;font-weight:bold;">3,581</div>
<div class="t" style="left:116.40px;width:300px;text-align:right;top:21.85px;font-size:7.79px;line-height:10.91px;color:#1d2d3e;font-weight:bold;">3,573</div>
<div class="t" style="left:172.40px;width:300px;text-align:right;top:21.85px;font-size:7.79px;line-height:10.91px;color:#1d2d3e;font-weight:bold;">3,491</div>
<div class="t" style="left:228.40px;width:300px;text-align:right;top:21.85px;font-size:7.79px;line-height:10.91px;color:#1d2d3e;font-weight:bold;">3,572</div>
<div class="t" style="left:284.40px;width:300px;text-align:right;top:21.85px;font-size:7.79px;line-height:10.91px;color:#1d2d3e;font-weight:bold;">3,589</div>
<div class="t" style="left:340.40px;width:300px;text-align:right;top:21.85px;font-size:7.79px;line-height:10.91px;color:#1d2d3e;font-weight:bold;">3,667</div>
<div class="t" style="left:397.40px;width:300px;text-align:right;top:21.85px;font-size:7.79px;line-height:10.91px;color:#1d2d3e;font-weight:bold;">3,570</div>
<div class="t" style="left:452.40px;width:300px;text-align:right;top:21.85px;font-size:7.79px;line-height:10.91px;color:#1d2d3e;font-weight:bold;">3,618</div>
<div class="t" style="left:508.40px;width:300px;text-align:right;top:21.85px;font-size:7.79px;line-height:10.91px;color:#1d2d3e;font-weight:bold;">3,706</div>
<div class="t" style="left:564.40px;width:300px;text-align:right;top:21.85px;font-size:7.79px;line-height:10.91px;color:#1d2d3e;font-weight:bold;">3,466</div>
<div class="t" style="left:620.40px;width:300px;text-align:right;top:21.85px;font-size:7.79px;line-height:10.91px;color:#1d2d3e;font-weight:bold;">3,564</div>
<div class="t" style="left:676.40px;width:300px;text-align:right;top:21.85px;font-size:7.79px;line-height:10.91px;color:#1d2d3e;font-weight:bold;">3,748</div>
<div class="t" style="left:732.40px;width:300px;text-align:right;top:21.85px;font-size:7.79px;line-height:10.91px;color:#1d2d3e;font-weight:bold;">3,727</div>
<div class="t" style="left:-136.00px;width:300px;text-align:center;top:32.51px;font-size:7.7px;line-height:10.78px;color:#1d2d3e;font-weight:normal;">3</div>
<div class="t" style="left:186.00px;top:32.47px;font-size:7.75px;line-height:10.85px;color:#1d2d3e;font-weight:bold;">Actuals Qty Prior Yr</div>
<div class="t" style="left:60.40px;width:300px;text-align:right;top:32.45px;font-size:7.79px;line-height:10.91px;color:#1d2d3e;font-weight:bold;">3,332</div>
<div class="t" style="left:116.40px;width:300px;text-align:right;top:32.45px;font-size:7.79px;line-height:10.91px;color:#1d2d3e;font-weight:bold;">3,333</div>
<div class="t" style="left:172.40px;width:300px;text-align:right;top:32.45px;font-size:7.79px;line-height:10.91px;color:#1d2d3e;font-weight:bold;">3,161</div>
<div class="t" style="left:228.40px;width:300px;text-align:right;top:32.45px;font-size:7.79px;line-height:10.91px;color:#1d2d3e;font-weight:bold;">3,280</div>
<div class="t" style="left:284.40px;width:300px;text-align:right;top:32.45px;font-size:7.79px;line-height:10.91px;color:#1d2d3e;font-weight:bold;">3,152</div>
<div class="t" style="left:340.40px;width:300px;text-align:right;top:32.45px;font-size:7.79px;line-height:10.91px;color:#1d2d3e;font-weight:bold;">3,357</div>
<div class="t" style="left:397.40px;width:300px;text-align:right;top:32.45px;font-size:7.79px;line-height:10.91px;color:#1d2d3e;font-weight:bold;">3,463</div>
<div class="t" style="left:452.40px;width:300px;text-align:right;top:32.45px;font-size:7.79px;line-height:10.91px;color:#1d2d3e;font-weight:bold;">4,077</div>
<div class="t" style="left:508.40px;width:300px;text-align:right;top:32.45px;font-size:7.79px;line-height:10.91px;color:#1d2d3e;font-weight:bold;">3,551</div>
<div class="t" style="left:564.40px;width:300px;text-align:right;top:32.45px;font-size:7.79px;line-height:10.91px;color:#1d2d3e;font-weight:bold;">4,381</div>
<div class="t" style="left:620.40px;width:300px;text-align:right;top:32.45px;font-size:7.79px;line-height:10.91px;color:#1d2d3e;font-weight:bold;">3,604</div>
<div class="t" style="left:676.40px;width:300px;text-align:right;top:32.45px;font-size:7.79px;line-height:10.91px;color:#1d2d3e;font-weight:bold;">3,428</div>
<div class="t" style="left:732.40px;width:300px;text-align:right;top:32.45px;font-size:7.79px;line-height:10.91px;color:#1d2d3e;font-weight:bold;">3,705</div>
<div class="t" style="left:-136.00px;width:300px;text-align:center;top:43.11px;font-size:7.7px;line-height:10.78px;color:#1d2d3e;font-weight:normal;">4</div>
<div class="t" style="left:186.00px;top:43.07px;font-size:7.75px;line-height:10.85px;color:#1d2d3e;font-weight:bold;">Sensed Demand Qty Final</div>
<div class="t" style="left:-136.00px;width:300px;text-align:center;top:53.71px;font-size:7.7px;line-height:10.78px;color:#1d2d3e;font-weight:normal;">5</div>
<div class="t" style="left:186.00px;top:53.68px;font-size:7.75px;line-height:10.85px;color:#1d2d3e;font-weight:bold;">Local Demand Plan Qty Final</div>
<div class="t" style="left:60.40px;width:300px;text-align:right;top:53.65px;font-size:7.79px;line-height:10.91px;color:#1d2d3e;font-weight:bold;">3,305</div>
<div class="t" style="left:116.40px;width:300px;text-align:right;top:53.65px;font-size:7.79px;line-height:10.91px;color:#1d2d3e;font-weight:bold;">3,201</div>
<div class="t" style="left:172.40px;width:300px;text-align:right;top:53.65px;font-size:7.79px;line-height:10.91px;color:#1d2d3e;font-weight:bold;">3,265</div>
<div class="t" style="left:228.40px;width:300px;text-align:right;top:53.65px;font-size:7.79px;line-height:10.91px;color:#1d2d3e;font-weight:bold;">3,525</div>
<div class="t" style="left:284.40px;width:300px;text-align:right;top:53.65px;font-size:7.79px;line-height:10.91px;color:#1d2d3e;font-weight:bold;">3,698</div>
<div class="t" style="left:340.40px;width:300px;text-align:right;top:53.65px;font-size:7.79px;line-height:10.91px;color:#1d2d3e;font-weight:bold;">3,447</div>
<div class="t" style="left:397.40px;width:300px;text-align:right;top:53.65px;font-size:7.79px;line-height:10.91px;color:#1d2d3e;font-weight:bold;">3,404</div>
<div class="t" style="left:452.40px;width:300px;text-align:right;top:53.65px;font-size:7.79px;line-height:10.91px;color:#1d2d3e;font-weight:bold;">3,335</div>
<div class="t" style="left:508.40px;width:300px;text-align:right;top:53.65px;font-size:7.79px;line-height:10.91px;color:#1d2d3e;font-weight:bold;">3,511</div>
<div class="t" style="left:564.40px;width:300px;text-align:right;top:53.65px;font-size:7.79px;line-height:10.91px;color:#1d2d3e;font-weight:bold;">3,113</div>
<div class="t" style="left:620.40px;width:300px;text-align:right;top:53.65px;font-size:7.79px;line-height:10.91px;color:#1d2d3e;font-weight:bold;">3,393</div>
<div class="t" style="left:676.40px;width:300px;text-align:right;top:53.65px;font-size:7.79px;line-height:10.91px;color:#1d2d3e;font-weight:bold;">3,195</div>
<div class="t" style="left:732.40px;width:300px;text-align:right;top:53.65px;font-size:7.79px;line-height:10.91px;color:#1d2d3e;font-weight:bold;">3,295</div>
<div class="t" style="left:-136.00px;width:300px;text-align:center;top:64.31px;font-size:7.7px;line-height:10.78px;color:#1d2d3e;font-weight:normal;">6</div>
<div class="t" style="left:186.00px;top:64.27px;font-size:7.75px;line-height:10.85px;color:#1d2d3e;font-weight:bold;">Demand Planning Qty</div>
<div class="t" style="left:60.40px;width:300px;text-align:right;top:64.25px;font-size:7.79px;line-height:10.91px;color:#1d2d3e;font-weight:bold;">3,305</div>
<div class="t" style="left:116.40px;width:300px;text-align:right;top:64.25px;font-size:7.79px;line-height:10.91px;color:#1d2d3e;font-weight:bold;">3,201</div>
<div class="t" style="left:172.40px;width:300px;text-align:right;top:64.25px;font-size:7.79px;line-height:10.91px;color:#1d2d3e;font-weight:bold;">3,265</div>
<div class="t" style="left:228.40px;width:300px;text-align:right;top:64.25px;font-size:7.79px;line-height:10.91px;color:#1d2d3e;font-weight:bold;">3,525</div>
<div class="t" style="left:284.40px;width:300px;text-align:right;top:64.25px;font-size:7.79px;line-height:10.91px;color:#1d2d3e;font-weight:bold;">3,698</div>
<div class="t" style="left:340.40px;width:300px;text-align:right;top:64.25px;font-size:7.79px;line-height:10.91px;color:#1d2d3e;font-weight:bold;">3,447</div>
<div class="t" style="left:397.40px;width:300px;text-align:right;top:64.25px;font-size:7.79px;line-height:10.91px;color:#1d2d3e;font-weight:bold;">3,404</div>
<div class="t" style="left:452.40px;width:300px;text-align:right;top:64.25px;font-size:7.79px;line-height:10.91px;color:#1d2d3e;font-weight:bold;">3,335</div>
<div class="t" style="left:508.40px;width:300px;text-align:right;top:64.25px;font-size:7.79px;line-height:10.91px;color:#1d2d3e;font-weight:bold;">3,511</div>
<div class="t" style="left:564.40px;width:300px;text-align:right;top:64.25px;font-size:7.79px;line-height:10.91px;color:#1d2d3e;font-weight:bold;">3,113</div>
<div class="t" style="left:620.40px;width:300px;text-align:right;top:64.25px;font-size:7.79px;line-height:10.91px;color:#1d2d3e;font-weight:bold;">3,393</div>
<div class="t" style="left:676.40px;width:300px;text-align:right;top:64.25px;font-size:7.79px;line-height:10.91px;color:#1d2d3e;font-weight:bold;">3,195</div>
<div class="t" style="left:732.40px;width:300px;text-align:right;top:64.25px;font-size:7.79px;line-height:10.91px;color:#1d2d3e;font-weight:bold;">3,295</div>
<div class="t" style="left:-136.00px;width:300px;text-align:center;top:74.91px;font-size:7.7px;line-height:10.78px;color:#1d2d3e;font-weight:normal;">7</div>
<div class="t" style="left:186.00px;top:74.87px;font-size:7.75px;line-height:10.85px;color:#1d2d3e;font-weight:bold;">Demand Planning Qty Adjusted</div>
<div class="t" style="left:60.40px;width:300px;text-align:right;top:74.85px;font-size:7.79px;line-height:10.91px;color:#1d2d3e;font-weight:bold;">3,500</div>
<div class="t" style="left:116.40px;width:300px;text-align:right;top:74.85px;font-size:7.79px;line-height:10.91px;color:#1d2d3e;font-weight:bold;">0</div>
<div class="t" style="left:-136.00px;width:300px;text-align:center;top:85.51px;font-size:7.7px;line-height:10.78px;color:#1d2d3e;font-weight:normal;">8</div>
<div class="t" style="left:186.00px;top:85.47px;font-size:7.75px;line-height:10.85px;color:#1d2d3e;font-weight:bold;">Demand Planning Qty Final</div>
<div class="t" style="left:60.40px;width:300px;text-align:right;top:85.45px;font-size:7.79px;line-height:10.91px;color:#1d2d3e;font-weight:bold;">5,791</div>
<div class="t" style="left:116.40px;width:300px;text-align:right;top:85.45px;font-size:7.79px;line-height:10.91px;color:#1d2d3e;font-weight:bold;">2,214</div>
<div class="t" style="left:172.40px;width:300px;text-align:right;top:85.45px;font-size:7.79px;line-height:10.91px;color:#1d2d3e;font-weight:bold;">3,265</div>
<div class="t" style="left:228.40px;width:300px;text-align:right;top:85.45px;font-size:7.79px;line-height:10.91px;color:#1d2d3e;font-weight:bold;">3,525</div>
<div class="t" style="left:284.40px;width:300px;text-align:right;top:85.45px;font-size:7.79px;line-height:10.91px;color:#1d2d3e;font-weight:bold;">3,698</div>
<div class="t" style="left:340.40px;width:300px;text-align:right;top:85.45px;font-size:7.79px;line-height:10.91px;color:#1d2d3e;font-weight:bold;">3,447</div>
<div class="t" style="left:397.40px;width:300px;text-align:right;top:85.45px;font-size:7.79px;line-height:10.91px;color:#1d2d3e;font-weight:bold;">3,404</div>
<div class="t" style="left:452.40px;width:300px;text-align:right;top:85.45px;font-size:7.79px;line-height:10.91px;color:#1d2d3e;font-weight:bold;">3,335</div>
<div class="t" style="left:508.40px;width:300px;text-align:right;top:85.45px;font-size:7.79px;line-height:10.91px;color:#1d2d3e;font-weight:bold;">3,511</div>
<div class="t" style="left:564.40px;width:300px;text-align:right;top:85.45px;font-size:7.79px;line-height:10.91px;color:#1d2d3e;font-weight:bold;">3,113</div>
<div class="t" style="left:620.40px;width:300px;text-align:right;top:85.45px;font-size:7.79px;line-height:10.91px;color:#1d2d3e;font-weight:bold;">3,393</div>
<div class="t" style="left:676.40px;width:300px;text-align:right;top:85.45px;font-size:7.79px;line-height:10.91px;color:#1d2d3e;font-weight:bold;">3,195</div>
<div class="t" style="left:732.40px;width:300px;text-align:right;top:85.45px;font-size:7.79px;line-height:10.91px;color:#1d2d3e;font-weight:bold;">3,295</div>
<div class="t" style="left:-136.00px;width:300px;text-align:center;top:96.11px;font-size:7.7px;line-height:10.78px;color:#1d2d3e;font-weight:normal;">9</div>
<div class="t" style="left:186.00px;top:96.07px;font-size:7.75px;line-height:10.85px;color:#1d2d3e;font-weight:bold;">Total Customer Receipts</div>
<div class="t" style="left:60.40px;width:300px;text-align:right;top:96.05px;font-size:7.79px;line-height:10.91px;color:#1d2d3e;font-weight:bold;">3,606</div>
<div class="t" style="left:116.40px;width:300px;text-align:right;top:96.05px;font-size:7.79px;line-height:10.91px;color:#1d2d3e;font-weight:bold;">3,606</div>
<div class="t" style="left:172.40px;width:300px;text-align:right;top:96.05px;font-size:7.79px;line-height:10.91px;color:#1d2d3e;font-weight:bold;">3,606</div>
<div class="t" style="left:228.40px;width:300px;text-align:right;top:96.05px;font-size:7.79px;line-height:10.91px;color:#1d2d3e;font-weight:bold;">3,606</div>
<div class="t" style="left:284.40px;width:300px;text-align:right;top:96.05px;font-size:7.79px;line-height:10.91px;color:#1d2d3e;font-weight:bold;">3,606</div>
<div class="t" style="left:340.40px;width:300px;text-align:right;top:96.05px;font-size:7.79px;line-height:10.91px;color:#1d2d3e;font-weight:bold;">3,606</div>
<div class="t" style="left:397.40px;width:300px;text-align:right;top:96.05px;font-size:7.79px;line-height:10.91px;color:#1d2d3e;font-weight:bold;">3,606</div>
<div class="t" style="left:452.40px;width:300px;text-align:right;top:96.05px;font-size:7.79px;line-height:10.91px;color:#1d2d3e;font-weight:bold;">3,606</div>
<div class="t" style="left:508.40px;width:300px;text-align:right;top:96.05px;font-size:7.79px;line-height:10.91px;color:#1d2d3e;font-weight:bold;">3,606</div>
<div class="t" style="left:564.40px;width:300px;text-align:right;top:96.05px;font-size:7.79px;line-height:10.91px;color:#1d2d3e;font-weight:bold;">3,606</div>
<div class="t" style="left:620.40px;width:300px;text-align:right;top:96.05px;font-size:7.79px;line-height:10.91px;color:#1d2d3e;font-weight:bold;">3,606</div>
<div class="t" style="left:676.40px;width:300px;text-align:right;top:96.05px;font-size:7.79px;line-height:10.91px;color:#1d2d3e;font-weight:bold;">3,606</div>
<div class="t" style="left:732.40px;width:300px;text-align:right;top:96.05px;font-size:7.79px;line-height:10.91px;color:#1d2d3e;font-weight:bold;">3,606</div>
<div class="t" style="left:-136.00px;width:300px;text-align:center;top:106.71px;font-size:7.7px;line-height:10.78px;color:#1d2d3e;font-weight:normal;">10</div>
<div class="t" style="left:186.00px;top:106.67px;font-size:7.75px;line-height:10.85px;color:#1d2d3e;font-weight:bold;">Consensus Demand Final</div>
<div class="t" style="left:31.30px;top:11.32px;font-size:7.69px;line-height:10.77px;color:#1d2d3e;font-weight:bold;">FAMILY 100-HEA...</div>
<div class="t" style="left:108.10px;top:11.25px;font-size:7.78px;line-height:10.89px;color:#1d2d3e;font-weight:bold;">(Total)</div>
</div>
<div style="position:absolute;left:17.40px;top:272.20px;width:1039.00px;height:9.50px;background:#fff"></div>
<svg style="position:absolute;left:20px;top:273.5px" width="8" height="8" viewBox="0 0 8 8"><path d="M6 0.6 L6 7 L1 3.8 Z" fill="#6f8194"/></svg>
<div style="position:absolute;left:30.10px;top:274.10px;width:329.40px;height:6.20px;background:#7b8ea3;border-radius:3.1px"></div>
<svg style="position:absolute;left:1037px;top:273.5px" width="8" height="8" viewBox="0 0 8 8"><path d="M1.2 0.9 L1.2 7.1 L5.8 4 Z" fill="#8a9aab"/></svg>
<div style="position:absolute;left:1046.20px;top:161.20px;width:10.00px;height:111.00px;background:#fff"></div>
<svg style="position:absolute;left:1047.5px;top:163.5px" width="8" height="7" viewBox="0 0 8 7"><path d="M0.5 6.2 L7.5 6.2 L4 0.8 Z" fill="#8493a3"/></svg>
<div style="position:absolute;left:1049.30px;top:173.70px;width:5.20px;height:12.50px;background:#7b8ea3;border-radius:2.6px"></div>
<svg style="position:absolute;left:1047.5px;top:262.3px" width="8" height="7" viewBox="0 0 8 7"><path d="M0.5 0.8 L7.5 0.8 L4 6.2 Z" fill="#8493a3"/></svg>
<div style="position:absolute;left:17.60px;top:281.60px;width:1039.00px;height:1.20px;background:#5a97dd"></div>
<div style="position:absolute;left:17.60px;top:294.20px;width:1039.00px;height:0.80px;background:#f1f2f3"></div>
<div style="position:absolute;left:17.60px;top:299.80px;width:1039.00px;height:1.00px;background:#d3d7db"></div>
<div style="position:absolute;left:17.60px;top:308.10px;width:1039.00px;height:0.80px;background:#eef0f2"></div>
<svg style="position:absolute;left:490px;top:301px" width="95" height="8" viewBox="0 0 95 8"><defs><linearGradient id="gl" x1="0" x2="1"><stop offset="0" stop-color="#c8ced4" stop-opacity="0"/><stop offset="1" stop-color="#b0b8c0"/></linearGradient><linearGradient id="gr" x1="0" x2="1"><stop offset="0" stop-color="#b0b8c0"/><stop offset="1" stop-color="#c8ced4" stop-opacity="0"/></linearGradient></defs><rect x="2" y="3.2" width="37" height="0.7" fill="url(#gl)"/><rect x="56" y="3.2" width="37" height="0.7" fill="url(#gr)"/><rect x="43.0" y="2.0" width="1.6" height="1.3" fill="#0a6ed1"/><rect x="43.0" y="4.6" width="1.6" height="1.3" fill="#0a6ed1"/><rect x="45.6" y="2.0" width="1.6" height="1.3" fill="#0a6ed1"/><rect x="45.6" y="4.6" width="1.6" height="1.3" fill="#0a6ed1"/><rect x="48.2" y="2.0" width="1.6" height="1.3" fill="#0a6ed1"/><rect x="48.2" y="4.6" width="1.6" height="1.3" fill="#0a6ed1"/><rect x="50.8" y="2.0" width="1.6" height="1.3" fill="#0a6ed1"/><rect x="50.8" y="4.6" width="1.6" height="1.3" fill="#0a6ed1"/></svg>
<div class="t" style="left:26.50px;top:311.63px;font-size:8.95px;line-height:12.53px;color:#1d2d3e;font-weight:bold;">Global Demand Plan</div>
<svg style="position:absolute;left:963.5px;top:313.2px" width="11" height="9" viewBox="0 0 11 9"><path d="M0.9 1.1 L7.6 1.1 L4.9 4.3 L4.9 6.9 L3.6 6.2 L3.6 4.3 Z" fill="none" stroke="#0064d9" stroke-width="1.15" stroke-linejoin="round"/><path d="M5.9 7.3 Q7 7.6 8.6 6.1" fill="none" stroke="#0064d9" stroke-width="1.1"/></svg><svg style="position:absolute;left:976px;top:313.5px" width="9" height="7" viewBox="0 0 9 7"><path d="M1.3 2 L4.3 5 L7.3 2" fill="none" stroke="#0064d9" stroke-width="1.1"/></svg>
<svg style="position:absolute;left:996.3px;top:313px" width="10" height="9" viewBox="0 0 10 9"><path d="M0.8 1.6 L9.2 1.6 M0.8 4.5 L9.2 4.5 M0.8 7.4 L9.2 7.4" stroke="#0064d9" stroke-width="1"/><circle cx="6.8" cy="1.6" r="1.15" fill="#fff" stroke="#0064d9" stroke-width="0.9"/><circle cx="3.2" cy="4.5" r="1.15" fill="#fff" stroke="#0064d9" stroke-width="0.9"/><circle cx="6.8" cy="7.4" r="1.15" fill="#fff" stroke="#0064d9" stroke-width="0.9"/></svg>
<svg style="position:absolute;left:1018px;top:313px" width="10" height="9" viewBox="0 0 10 9"><path d="M0.8 3.8 L0.8 0.8 L3.8 0.8 M9.2 5.2 L9.2 8.2 L6.2 8.2" fill="none" stroke="#0064d9" stroke-width="1.15"/><path d="M5.6 3.4 L8.8 0.8 M6.3 0.8 L9.1 0.8 L9.1 3.3 M4.4 5.6 L1.2 8.2 M3.7 8.2 L0.9 8.2 L0.9 5.7" fill="none" stroke="#0064d9" stroke-width="1.05"/></svg>
<svg style="position:absolute;left:1040.5px;top:315.5px" width="10" height="4" viewBox="0 0 10 4"><circle cx="1.4" cy="1.8" r="1.25" fill="#0064d9"/><circle cx="4.9" cy="1.8" r="1.25" fill="#0064d9"/><circle cx="8.4" cy="1.8" r="1.25" fill="#0064d9"/></svg>
<div style="position:absolute;left:17.60px;top:325.70px;width:1039.00px;height:1.00px;background:#d9dde2"></div>
<div style="position:absolute;left:927.50px;top:339.30px;width:8.20px;height:7.60px;background:#5899da"></div>
<div style="position:absolute;left:927.50px;top:353.20px;width:8.20px;height:7.60px;background:#19a979"></div>
<svg style="position:absolute;left:923px;top:366px" width="18" height="24" viewBox="0 0 18 24"><path d="M0.7 5.2 L16.7 5.2" stroke="#e8743b" stroke-width="1.1"/><circle cx="8.3" cy="5.2" r="1.9" fill="#e8743b"/><path d="M0.7 19.1 L16.7 19.1" stroke="#e0237f" stroke-width="1.1"/><circle cx="8.3" cy="19.1" r="1.9" fill="#e0237f"/></svg>
<div class="t" style="left:942.70px;top:339.02px;font-size:6.54px;line-height:9.16px;color:#3e4a57;font-weight:normal;">Local Demand Plan Qty Final (EA)</div>
<div class="t" style="left:942.70px;top:352.92px;font-size:6.54px;line-height:9.16px;color:#3e4a57;font-weight:normal;">Demand Planning Qty Final (EA)</div>
<div class="t" style="left:942.70px;top:367.12px;font-size:6.54px;line-height:9.16px;color:#3e4a57;font-weight:normal;">Actuals Qty Prior Yr (EA)</div>
<div class="t" style="left:942.70px;top:381.02px;font-size:6.54px;line-height:9.16px;color:#3e4a57;font-weight:normal;">Sales Fcst Qty (EA)</div>
<svg style="position:absolute;left:0;top:0" width="1058" height="475" viewBox="0 0 1058 475">
<rect x="62" y="335.1" width="853" height="0.9" fill="#e3e6ea"/>
<rect x="62" y="385.2" width="853" height="0.8" fill="#eef0f2"/>
<rect x="62.20" y="411.0" width="1.78" height="25.6" fill="#5899da"/>
<rect x="63.98" y="348.0" width="1.78" height="88.6" fill="#19a979"/>
<rect x="66.55" y="413.0" width="1.78" height="23.6" fill="#5899da"/>
<rect x="68.33" y="413.0" width="1.78" height="23.6" fill="#19a979"/>
<rect x="70.91" y="412.0" width="1.78" height="24.6" fill="#5899da"/>
<rect x="72.69" y="412.0" width="1.78" height="24.6" fill="#19a979"/>
<rect x="75.26" y="411.0" width="1.78" height="25.6" fill="#5899da"/>
<rect x="77.04" y="411.0" width="1.78" height="25.6" fill="#19a979"/>
<rect x="79.61" y="410.0" width="1.78" height="26.6" fill="#5899da"/>
<rect x="81.39" y="410.0" width="1.78" height="26.6" fill="#19a979"/>
<rect x="83.97" y="410.0" width="1.78" height="26.6" fill="#5899da"/>
<rect x="85.75" y="410.0" width="1.78" height="26.6" fill="#19a979"/>
<rect x="88.32" y="412.0" width="1.78" height="24.6" fill="#5899da"/>
<rect x="90.10" y="412.0" width="1.78" height="24.6" fill="#19a979"/>
<rect x="92.67" y="412.0" width="1.78" height="24.6" fill="#5899da"/>
<rect x="94.45" y="412.0" width="1.78" height="24.6" fill="#19a979"/>
<rect x="97.02" y="413.0" width="1.78" height="23.6" fill="#5899da"/>
<rect x="98.80" y="413.0" width="1.78" height="23.6" fill="#19a979"/>
<rect x="101.38" y="413.0" width="1.78" height="23.6" fill="#5899da"/>
<rect x="103.16" y="413.0" width="1.78" height="23.6" fill="#19a979"/>
<rect x="105.73" y="412.0" width="1.78" height="24.6" fill="#5899da"/>
<rect x="107.51" y="412.0" width="1.78" height="24.6" fill="#19a979"/>
<rect x="110.08" y="412.0" width="1.78" height="24.6" fill="#5899da"/>
<rect x="111.86" y="412.0" width="1.78" height="24.6" fill="#19a979"/>
<rect x="114.44" y="411.0" width="1.78" height="25.6" fill="#5899da"/>
<rect x="116.22" y="411.0" width="1.78" height="25.6" fill="#19a979"/>
<rect x="118.79" y="412.0" width="1.78" height="24.6" fill="#5899da"/>
<rect x="120.57" y="412.0" width="1.78" height="24.6" fill="#19a979"/>
<rect x="123.14" y="407.0" width="1.78" height="29.6" fill="#5899da"/>
<rect x="124.92" y="407.0" width="1.78" height="29.6" fill="#19a979"/>
<rect x="127.50" y="409.0" width="1.78" height="27.6" fill="#5899da"/>
<rect x="129.28" y="409.0" width="1.78" height="27.6" fill="#19a979"/>
<rect x="131.85" y="407.0" width="1.78" height="29.6" fill="#5899da"/>
<rect x="133.63" y="407.0" width="1.78" height="29.6" fill="#19a979"/>
<rect x="136.20" y="408.0" width="1.78" height="28.6" fill="#5899da"/>
<rect x="137.98" y="408.0" width="1.78" height="28.6" fill="#19a979"/>
<rect x="140.56" y="408.0" width="1.78" height="28.6" fill="#5899da"/>
<rect x="142.34" y="408.0" width="1.78" height="28.6" fill="#19a979"/>
<rect x="144.91" y="409.0" width="1.78" height="27.6" fill="#5899da"/>
<rect x="146.69" y="409.0" width="1.78" height="27.6" fill="#19a979"/>
<rect x="149.26" y="409.0" width="1.78" height="27.6" fill="#5899da"/>
<rect x="151.04" y="409.0" width="1.78" height="27.6" fill="#19a979"/>
<rect x="153.61" y="404.0" width="1.78" height="32.6" fill="#5899da"/>
<rect x="155.39" y="404.0" width="1.78" height="32.6" fill="#19a979"/>
<rect x="157.97" y="404.0" width="1.78" height="32.6" fill="#5899da"/>
<rect x="159.75" y="404.0" width="1.78" height="32.6" fill="#19a979"/>
<rect x="162.32" y="410.0" width="1.78" height="26.6" fill="#5899da"/>
<rect x="164.10" y="410.0" width="1.78" height="26.6" fill="#19a979"/>
<rect x="166.67" y="407.0" width="1.78" height="29.6" fill="#5899da"/>
<rect x="168.45" y="407.0" width="1.78" height="29.6" fill="#19a979"/>
<rect x="171.03" y="405.0" width="1.78" height="31.6" fill="#5899da"/>
<rect x="172.81" y="405.0" width="1.78" height="31.6" fill="#19a979"/>
<rect x="175.38" y="405.0" width="1.78" height="31.6" fill="#5899da"/>
<rect x="177.16" y="405.0" width="1.78" height="31.6" fill="#19a979"/>
<rect x="179.73" y="405.0" width="1.78" height="31.6" fill="#5899da"/>
<rect x="181.51" y="405.0" width="1.78" height="31.6" fill="#19a979"/>
<rect x="184.09" y="408.5" width="1.78" height="28.1" fill="#5899da"/>
<rect x="185.87" y="408.5" width="1.78" height="28.1" fill="#19a979"/>
<rect x="188.44" y="410.0" width="1.78" height="26.6" fill="#5899da"/>
<rect x="190.22" y="410.0" width="1.78" height="26.6" fill="#19a979"/>
<rect x="192.79" y="410.0" width="1.78" height="26.6" fill="#5899da"/>
<rect x="194.57" y="410.0" width="1.78" height="26.6" fill="#19a979"/>
<rect x="197.14" y="409.0" width="1.78" height="27.6" fill="#5899da"/>
<rect x="198.92" y="409.0" width="1.78" height="27.6" fill="#19a979"/>
<rect x="201.50" y="409.0" width="1.78" height="27.6" fill="#5899da"/>
<rect x="203.28" y="409.0" width="1.78" height="27.6" fill="#19a979"/>
<rect x="205.85" y="411.0" width="1.78" height="25.6" fill="#5899da"/>
<rect x="207.63" y="411.0" width="1.78" height="25.6" fill="#19a979"/>
<rect x="210.20" y="409.0" width="1.78" height="27.6" fill="#5899da"/>
<rect x="211.98" y="409.0" width="1.78" height="27.6" fill="#19a979"/>
<rect x="214.56" y="410.0" width="1.78" height="26.6" fill="#5899da"/>
<rect x="216.34" y="410.0" width="1.78" height="26.6" fill="#19a979"/>
<rect x="218.91" y="410.0" width="1.78" height="26.6" fill="#5899da"/>
<rect x="220.69" y="410.0" width="1.78" height="26.6" fill="#19a979"/>
<rect x="223.26" y="410.0" width="1.78" height="26.6" fill="#5899da"/>
<rect x="225.04" y="410.0" width="1.78" height="26.6" fill="#19a979"/>
<rect x="227.62" y="412.0" width="1.78" height="24.6" fill="#5899da"/>
<rect x="229.40" y="412.0" width="1.78" height="24.6" fill="#19a979"/>
<rect x="231.97" y="409.0" width="1.78" height="27.6" fill="#5899da"/>
<rect x="233.75" y="409.0" width="1.78" height="27.6" fill="#19a979"/>
<rect x="236.32" y="411.0" width="1.78" height="25.6" fill="#5899da"/>
<rect x="238.10" y="411.0" width="1.78" height="25.6" fill="#19a979"/>
<rect x="240.68" y="411.5" width="1.78" height="25.1" fill="#5899da"/>
<rect x="242.46" y="411.5" width="1.78" height="25.1" fill="#19a979"/>
<rect x="245.03" y="430.7" width="1.78" height="5.9" fill="#5899da"/>
<rect x="246.81" y="430.7" width="1.78" height="5.9" fill="#19a979"/>
<rect x="249.38" y="432.0" width="1.78" height="4.6" fill="#5899da"/>
<rect x="251.16" y="432.0" width="1.78" height="4.6" fill="#19a979"/>
<rect x="253.73" y="425.3" width="1.78" height="11.3" fill="#5899da"/>
<rect x="255.51" y="432.8" width="1.78" height="3.8" fill="#19a979"/>
<rect x="258.09" y="424.4" width="1.78" height="12.2" fill="#5899da"/>
<rect x="259.87" y="425.3" width="1.78" height="11.3" fill="#19a979"/>
<rect x="262.44" y="430.0" width="1.78" height="6.6" fill="#5899da"/>
<rect x="264.22" y="430.0" width="1.78" height="6.6" fill="#19a979"/>
<rect x="266.79" y="423.3" width="1.78" height="13.3" fill="#5899da"/>
<rect x="268.57" y="423.3" width="1.78" height="13.3" fill="#19a979"/>
<rect x="271.15" y="427.0" width="1.78" height="9.6" fill="#5899da"/>
<rect x="272.93" y="427.0" width="1.78" height="9.6" fill="#19a979"/>
<rect x="275.50" y="427.0" width="1.78" height="9.6" fill="#5899da"/>
<rect x="277.28" y="427.0" width="1.78" height="9.6" fill="#19a979"/>
<rect x="279.85" y="422.7" width="1.78" height="13.9" fill="#5899da"/>
<rect x="281.63" y="422.7" width="1.78" height="13.9" fill="#19a979"/>
<rect x="284.21" y="421.5" width="1.78" height="15.1" fill="#5899da"/>
<rect x="285.99" y="422.3" width="1.78" height="14.3" fill="#19a979"/>
<rect x="288.56" y="421.0" width="1.78" height="15.6" fill="#5899da"/>
<rect x="290.34" y="421.0" width="1.78" height="15.6" fill="#19a979"/>
<rect x="292.91" y="419.8" width="1.78" height="16.8" fill="#5899da"/>
<rect x="294.69" y="419.8" width="1.78" height="16.8" fill="#19a979"/>
<rect x="297.27" y="422.7" width="1.78" height="13.9" fill="#5899da"/>
<rect x="299.05" y="418.1" width="1.78" height="18.5" fill="#19a979"/>
<rect x="301.62" y="422.7" width="1.78" height="13.9" fill="#5899da"/>
<rect x="303.40" y="422.7" width="1.78" height="13.9" fill="#19a979"/>
<rect x="305.97" y="426.0" width="1.78" height="10.6" fill="#5899da"/>
<rect x="307.75" y="426.0" width="1.78" height="10.6" fill="#19a979"/>
<rect x="310.32" y="425.5" width="1.78" height="11.1" fill="#5899da"/>
<rect x="312.10" y="432.0" width="1.78" height="4.6" fill="#19a979"/>
<rect x="314.68" y="428.0" width="1.78" height="8.6" fill="#5899da"/>
<rect x="316.46" y="428.0" width="1.78" height="8.6" fill="#19a979"/>
<rect x="319.03" y="428.0" width="1.78" height="8.6" fill="#5899da"/>
<rect x="320.81" y="425.3" width="1.78" height="11.3" fill="#19a979"/>
<rect x="323.38" y="415.6" width="1.78" height="21.0" fill="#5899da"/>
<rect x="325.16" y="415.6" width="1.78" height="21.0" fill="#19a979"/>
<rect x="327.74" y="415.6" width="1.78" height="21.0" fill="#5899da"/>
<rect x="329.52" y="415.6" width="1.78" height="21.0" fill="#19a979"/>
<rect x="332.09" y="416.8" width="1.78" height="19.8" fill="#5899da"/>
<rect x="333.87" y="416.8" width="1.78" height="19.8" fill="#19a979"/>
<rect x="336.44" y="421.5" width="1.78" height="15.1" fill="#5899da"/>
<rect x="338.22" y="421.5" width="1.78" height="15.1" fill="#19a979"/>
<rect x="340.80" y="415.6" width="1.78" height="21.0" fill="#5899da"/>
<rect x="342.58" y="415.6" width="1.78" height="21.0" fill="#19a979"/>
<rect x="345.15" y="415.8" width="1.78" height="20.8" fill="#5899da"/>
<rect x="346.93" y="412.0" width="1.78" height="24.6" fill="#19a979"/>
<rect x="349.50" y="422.5" width="1.78" height="14.1" fill="#5899da"/>
<rect x="351.28" y="422.5" width="1.78" height="14.1" fill="#19a979"/>
<rect x="353.86" y="425.8" width="1.78" height="10.8" fill="#5899da"/>
<rect x="355.64" y="425.8" width="1.78" height="10.8" fill="#19a979"/>
<rect x="358.21" y="425.8" width="1.78" height="10.8" fill="#5899da"/>
<rect x="359.99" y="425.8" width="1.78" height="10.8" fill="#19a979"/>
<rect x="362.56" y="418.7" width="1.78" height="17.9" fill="#5899da"/>
<rect x="364.34" y="418.7" width="1.78" height="17.9" fill="#19a979"/>
<rect x="366.91" y="413.5" width="1.78" height="23.1" fill="#5899da"/>
<rect x="368.69" y="413.5" width="1.78" height="23.1" fill="#19a979"/>
<rect x="371.27" y="414.4" width="1.78" height="22.2" fill="#5899da"/>
<rect x="373.05" y="414.4" width="1.78" height="22.2" fill="#19a979"/>
<rect x="375.62" y="411.1" width="1.78" height="25.5" fill="#5899da"/>
<rect x="377.40" y="411.1" width="1.78" height="25.5" fill="#19a979"/>
<rect x="379.97" y="408.3" width="1.78" height="28.3" fill="#5899da"/>
<rect x="381.75" y="408.3" width="1.78" height="28.3" fill="#19a979"/>
<rect x="384.33" y="407.3" width="1.78" height="29.3" fill="#5899da"/>
<rect x="386.11" y="407.3" width="1.78" height="29.3" fill="#19a979"/>
<rect x="388.68" y="407.3" width="1.78" height="29.3" fill="#5899da"/>
<rect x="390.46" y="407.3" width="1.78" height="29.3" fill="#19a979"/>
<rect x="393.03" y="407.3" width="1.78" height="29.3" fill="#5899da"/>
<rect x="394.81" y="407.3" width="1.78" height="29.3" fill="#19a979"/>
<rect x="397.39" y="412.0" width="1.78" height="24.6" fill="#5899da"/>
<rect x="399.17" y="412.0" width="1.78" height="24.6" fill="#19a979"/>
<rect x="401.74" y="417.3" width="1.78" height="19.3" fill="#5899da"/>
<rect x="403.52" y="417.3" width="1.78" height="19.3" fill="#19a979"/>
<rect x="406.09" y="416.3" width="1.78" height="20.3" fill="#5899da"/>
<rect x="407.87" y="416.3" width="1.78" height="20.3" fill="#19a979"/>
<rect x="410.44" y="412.5" width="1.78" height="24.1" fill="#5899da"/>
<rect x="412.22" y="412.5" width="1.78" height="24.1" fill="#19a979"/>
<rect x="414.80" y="414.0" width="1.78" height="22.6" fill="#5899da"/>
<rect x="416.58" y="414.0" width="1.78" height="22.6" fill="#19a979"/>
<rect x="419.15" y="412.0" width="1.78" height="24.6" fill="#5899da"/>
<rect x="420.93" y="412.0" width="1.78" height="24.6" fill="#19a979"/>
<rect x="423.50" y="412.0" width="1.78" height="24.6" fill="#5899da"/>
<rect x="425.28" y="412.0" width="1.78" height="24.6" fill="#19a979"/>
<rect x="427.86" y="418.2" width="1.78" height="18.4" fill="#5899da"/>
<rect x="429.64" y="418.2" width="1.78" height="18.4" fill="#19a979"/>
<rect x="432.21" y="419.1" width="1.78" height="17.5" fill="#5899da"/>
<rect x="433.99" y="419.1" width="1.78" height="17.5" fill="#19a979"/>
<rect x="436.56" y="418.6" width="1.78" height="18.0" fill="#5899da"/>
<rect x="438.34" y="418.6" width="1.78" height="18.0" fill="#19a979"/>
<rect x="440.92" y="419.3" width="1.78" height="17.3" fill="#5899da"/>
<rect x="442.70" y="419.3" width="1.78" height="17.3" fill="#19a979"/>
<rect x="445.27" y="419.4" width="1.78" height="17.2" fill="#5899da"/>
<rect x="447.05" y="419.4" width="1.78" height="17.2" fill="#19a979"/>
<rect x="449.62" y="417.7" width="1.78" height="18.9" fill="#5899da"/>
<rect x="451.40" y="417.7" width="1.78" height="18.9" fill="#19a979"/>
<rect x="453.98" y="417.5" width="1.78" height="19.1" fill="#5899da"/>
<rect x="455.76" y="417.5" width="1.78" height="19.1" fill="#19a979"/>
<rect x="458.33" y="420.0" width="1.78" height="16.6" fill="#5899da"/>
<rect x="460.11" y="420.0" width="1.78" height="16.6" fill="#19a979"/>
<rect x="462.68" y="418.3" width="1.78" height="18.3" fill="#5899da"/>
<rect x="464.46" y="418.3" width="1.78" height="18.3" fill="#19a979"/>
<rect x="467.03" y="418.2" width="1.78" height="18.4" fill="#5899da"/>
<rect x="468.81" y="418.2" width="1.78" height="18.4" fill="#19a979"/>
<rect x="471.39" y="420.5" width="1.78" height="16.1" fill="#5899da"/>
<rect x="473.17" y="420.5" width="1.78" height="16.1" fill="#19a979"/>
<rect x="475.74" y="418.9" width="1.78" height="17.7" fill="#5899da"/>
<rect x="477.52" y="418.9" width="1.78" height="17.7" fill="#19a979"/>
<rect x="480.09" y="420.0" width="1.78" height="16.6" fill="#5899da"/>
<rect x="481.87" y="420.0" width="1.78" height="16.6" fill="#19a979"/>
<rect x="484.45" y="418.9" width="1.78" height="17.7" fill="#5899da"/>
<rect x="486.23" y="418.9" width="1.78" height="17.7" fill="#19a979"/>
<rect x="488.80" y="429.3" width="1.78" height="7.3" fill="#5899da"/>
<rect x="490.58" y="429.3" width="1.78" height="7.3" fill="#19a979"/>
<rect x="493.15" y="428.1" width="1.78" height="8.5" fill="#5899da"/>
<rect x="494.93" y="428.1" width="1.78" height="8.5" fill="#19a979"/>
<rect x="497.51" y="428.7" width="1.78" height="7.9" fill="#5899da"/>
<rect x="499.29" y="428.7" width="1.78" height="7.9" fill="#19a979"/>
<rect x="501.86" y="431.7" width="1.78" height="4.9" fill="#5899da"/>
<rect x="503.64" y="431.7" width="1.78" height="4.9" fill="#19a979"/>
<rect x="506.21" y="428.1" width="1.78" height="8.5" fill="#5899da"/>
<rect x="507.99" y="428.1" width="1.78" height="8.5" fill="#19a979"/>
<rect x="510.57" y="425.2" width="1.78" height="11.4" fill="#5899da"/>
<rect x="512.35" y="425.2" width="1.78" height="11.4" fill="#19a979"/>
<rect x="514.92" y="427.5" width="1.78" height="9.1" fill="#5899da"/>
<rect x="516.70" y="427.5" width="1.78" height="9.1" fill="#19a979"/>
<rect x="519.27" y="424.6" width="1.78" height="12.0" fill="#5899da"/>
<rect x="521.05" y="424.6" width="1.78" height="12.0" fill="#19a979"/>
<rect x="523.62" y="432.3" width="1.78" height="4.3" fill="#5899da"/>
<rect x="525.40" y="432.3" width="1.78" height="4.3" fill="#19a979"/>
<rect x="527.98" y="434.6" width="1.78" height="2.0" fill="#5899da"/>
<rect x="529.76" y="434.6" width="1.78" height="2.0" fill="#19a979"/>
<rect x="532.33" y="429.9" width="1.78" height="6.7" fill="#5899da"/>
<rect x="534.11" y="429.9" width="1.78" height="6.7" fill="#19a979"/>
<rect x="536.68" y="428.7" width="1.78" height="7.9" fill="#5899da"/>
<rect x="538.46" y="428.7" width="1.78" height="7.9" fill="#19a979"/>
<rect x="541.04" y="430.5" width="1.78" height="6.1" fill="#5899da"/>
<rect x="542.82" y="430.5" width="1.78" height="6.1" fill="#19a979"/>
<rect x="545.39" y="426.4" width="1.78" height="10.2" fill="#5899da"/>
<rect x="547.17" y="426.4" width="1.78" height="10.2" fill="#19a979"/>
<rect x="549.74" y="413.4" width="1.78" height="23.2" fill="#5899da"/>
<rect x="551.52" y="413.4" width="1.78" height="23.2" fill="#19a979"/>
<rect x="554.10" y="411.6" width="1.78" height="25.0" fill="#5899da"/>
<rect x="555.88" y="411.6" width="1.78" height="25.0" fill="#19a979"/>
<rect x="558.45" y="408.0" width="1.78" height="28.6" fill="#5899da"/>
<rect x="560.23" y="408.0" width="1.78" height="28.6" fill="#19a979"/>
<rect x="562.80" y="407.4" width="1.78" height="29.2" fill="#5899da"/>
<rect x="564.58" y="407.4" width="1.78" height="29.2" fill="#19a979"/>
<rect x="567.16" y="407.4" width="1.78" height="29.2" fill="#5899da"/>
<rect x="568.94" y="407.4" width="1.78" height="29.2" fill="#19a979"/>
<rect x="571.51" y="403.3" width="1.78" height="33.3" fill="#5899da"/>
<rect x="573.29" y="403.3" width="1.78" height="33.3" fill="#19a979"/>
<rect x="575.86" y="403.9" width="1.78" height="32.7" fill="#5899da"/>
<rect x="577.64" y="403.9" width="1.78" height="32.7" fill="#19a979"/>
<rect x="580.21" y="403.9" width="1.78" height="32.7" fill="#5899da"/>
<rect x="581.99" y="403.9" width="1.78" height="32.7" fill="#19a979"/>
<rect x="584.57" y="402.7" width="1.78" height="33.9" fill="#5899da"/>
<rect x="586.35" y="402.7" width="1.78" height="33.9" fill="#19a979"/>
<rect x="588.92" y="406.9" width="1.78" height="29.7" fill="#5899da"/>
<rect x="590.70" y="406.9" width="1.78" height="29.7" fill="#19a979"/>
<rect x="593.27" y="406.9" width="1.78" height="29.7" fill="#5899da"/>
<rect x="595.05" y="406.9" width="1.78" height="29.7" fill="#19a979"/>
<rect x="597.63" y="406.3" width="1.78" height="30.3" fill="#5899da"/>
<rect x="599.41" y="406.3" width="1.78" height="30.3" fill="#19a979"/>
<rect x="601.98" y="401.0" width="1.78" height="35.6" fill="#5899da"/>
<rect x="603.76" y="401.0" width="1.78" height="35.6" fill="#19a979"/>
<rect x="606.33" y="401.0" width="1.78" height="35.6" fill="#5899da"/>
<rect x="608.11" y="401.0" width="1.78" height="35.6" fill="#19a979"/>
<rect x="610.69" y="413.4" width="1.78" height="23.2" fill="#5899da"/>
<rect x="612.47" y="413.4" width="1.78" height="23.2" fill="#19a979"/>
<rect x="615.04" y="411.3" width="1.78" height="25.3" fill="#5899da"/>
<rect x="616.82" y="411.3" width="1.78" height="25.3" fill="#19a979"/>
<rect x="619.39" y="420.8" width="1.78" height="15.8" fill="#5899da"/>
<rect x="621.17" y="420.8" width="1.78" height="15.8" fill="#19a979"/>
<rect x="623.74" y="420.3" width="1.78" height="16.3" fill="#5899da"/>
<rect x="625.52" y="420.3" width="1.78" height="16.3" fill="#19a979"/>
<rect x="628.10" y="420.8" width="1.78" height="15.8" fill="#5899da"/>
<rect x="629.88" y="420.8" width="1.78" height="15.8" fill="#19a979"/>
<rect x="632.45" y="418.7" width="1.78" height="17.9" fill="#5899da"/>
<rect x="634.23" y="418.7" width="1.78" height="17.9" fill="#19a979"/>
<rect x="636.80" y="418.2" width="1.78" height="18.4" fill="#5899da"/>
<rect x="638.58" y="418.2" width="1.78" height="18.4" fill="#19a979"/>
<rect x="641.16" y="422.4" width="1.78" height="14.2" fill="#5899da"/>
<rect x="642.94" y="422.4" width="1.78" height="14.2" fill="#19a979"/>
<rect x="645.51" y="421.8" width="1.78" height="14.8" fill="#5899da"/>
<rect x="647.29" y="421.8" width="1.78" height="14.8" fill="#19a979"/>
<rect x="649.86" y="414.5" width="1.78" height="22.1" fill="#5899da"/>
<rect x="651.64" y="414.5" width="1.78" height="22.1" fill="#19a979"/>
<rect x="654.22" y="421.3" width="1.78" height="15.3" fill="#5899da"/>
<rect x="656.00" y="421.3" width="1.78" height="15.3" fill="#19a979"/>
<rect x="658.57" y="419.2" width="1.78" height="17.4" fill="#5899da"/>
<rect x="660.35" y="419.2" width="1.78" height="17.4" fill="#19a979"/>
<rect x="662.92" y="419.2" width="1.78" height="17.4" fill="#5899da"/>
<rect x="664.70" y="419.2" width="1.78" height="17.4" fill="#19a979"/>
<rect x="667.28" y="421.3" width="1.78" height="15.3" fill="#5899da"/>
<rect x="669.06" y="421.3" width="1.78" height="15.3" fill="#19a979"/>
<rect x="671.63" y="404.3" width="1.78" height="32.3" fill="#5899da"/>
<rect x="673.41" y="404.3" width="1.78" height="32.3" fill="#19a979"/>
<rect x="675.98" y="402.2" width="1.78" height="34.4" fill="#5899da"/>
<rect x="677.76" y="402.2" width="1.78" height="34.4" fill="#19a979"/>
<rect x="680.33" y="409.0" width="1.78" height="27.6" fill="#5899da"/>
<rect x="682.11" y="409.0" width="1.78" height="27.6" fill="#19a979"/>
<rect x="684.69" y="399.6" width="1.78" height="37.0" fill="#5899da"/>
<rect x="686.47" y="399.6" width="1.78" height="37.0" fill="#19a979"/>
<rect x="689.04" y="400.1" width="1.78" height="36.5" fill="#5899da"/>
<rect x="690.82" y="400.1" width="1.78" height="36.5" fill="#19a979"/>
<rect x="693.39" y="400.6" width="1.78" height="36.0" fill="#5899da"/>
<rect x="695.17" y="400.6" width="1.78" height="36.0" fill="#19a979"/>
<rect x="697.75" y="403.3" width="1.78" height="33.3" fill="#5899da"/>
<rect x="699.53" y="403.3" width="1.78" height="33.3" fill="#19a979"/>
<rect x="702.10" y="400.0" width="1.78" height="36.6" fill="#5899da"/>
<rect x="703.88" y="400.0" width="1.78" height="36.6" fill="#19a979"/>
<rect x="706.45" y="408.0" width="1.78" height="28.6" fill="#5899da"/>
<rect x="708.23" y="408.0" width="1.78" height="28.6" fill="#19a979"/>
<rect x="710.81" y="402.2" width="1.78" height="34.4" fill="#5899da"/>
<rect x="712.59" y="402.2" width="1.78" height="34.4" fill="#19a979"/>
<rect x="715.16" y="403.8" width="1.78" height="32.8" fill="#5899da"/>
<rect x="716.94" y="403.8" width="1.78" height="32.8" fill="#19a979"/>
<rect x="719.51" y="402.2" width="1.78" height="34.4" fill="#5899da"/>
<rect x="721.29" y="402.2" width="1.78" height="34.4" fill="#19a979"/>
<rect x="723.87" y="399.6" width="1.78" height="37.0" fill="#5899da"/>
<rect x="725.65" y="399.6" width="1.78" height="37.0" fill="#19a979"/>
<rect x="728.22" y="403.8" width="1.78" height="32.8" fill="#5899da"/>
<rect x="730.00" y="403.8" width="1.78" height="32.8" fill="#19a979"/>
<rect x="732.57" y="367.9" width="1.78" height="68.7" fill="#5899da"/>
<rect x="734.35" y="367.9" width="1.78" height="68.7" fill="#19a979"/>
<rect x="736.92" y="368.9" width="1.78" height="67.7" fill="#5899da"/>
<rect x="738.70" y="368.9" width="1.78" height="67.7" fill="#19a979"/>
<rect x="741.28" y="368.2" width="1.78" height="68.4" fill="#5899da"/>
<rect x="743.06" y="368.2" width="1.78" height="68.4" fill="#19a979"/>
<rect x="745.63" y="368.2" width="1.78" height="68.4" fill="#5899da"/>
<rect x="747.41" y="368.2" width="1.78" height="68.4" fill="#19a979"/>
<rect x="749.98" y="370.9" width="1.78" height="65.7" fill="#5899da"/>
<rect x="751.76" y="370.9" width="1.78" height="65.7" fill="#19a979"/>
<rect x="754.34" y="368.2" width="1.78" height="68.4" fill="#5899da"/>
<rect x="756.12" y="368.2" width="1.78" height="68.4" fill="#19a979"/>
<rect x="758.69" y="370.9" width="1.78" height="65.7" fill="#5899da"/>
<rect x="760.47" y="370.9" width="1.78" height="65.7" fill="#19a979"/>
<rect x="763.04" y="368.2" width="1.78" height="68.4" fill="#5899da"/>
<rect x="764.82" y="368.2" width="1.78" height="68.4" fill="#19a979"/>
<rect x="767.40" y="368.2" width="1.78" height="68.4" fill="#5899da"/>
<rect x="769.18" y="368.2" width="1.78" height="68.4" fill="#19a979"/>
<rect x="771.75" y="368.2" width="1.78" height="68.4" fill="#5899da"/>
<rect x="773.53" y="368.2" width="1.78" height="68.4" fill="#19a979"/>
<rect x="776.10" y="370.9" width="1.78" height="65.7" fill="#5899da"/>
<rect x="777.88" y="370.9" width="1.78" height="65.7" fill="#19a979"/>
<rect x="780.46" y="368.2" width="1.78" height="68.4" fill="#5899da"/>
<rect x="782.24" y="368.2" width="1.78" height="68.4" fill="#19a979"/>
<rect x="784.81" y="371.9" width="1.78" height="64.7" fill="#5899da"/>
<rect x="786.59" y="371.9" width="1.78" height="64.7" fill="#19a979"/>
<rect x="789.16" y="369.5" width="1.78" height="67.1" fill="#5899da"/>
<rect x="790.94" y="369.5" width="1.78" height="67.1" fill="#19a979"/>
<rect x="793.51" y="404.3" width="1.78" height="32.3" fill="#5899da"/>
<rect x="795.29" y="404.3" width="1.78" height="32.3" fill="#19a979"/>
<rect x="797.87" y="402.2" width="1.78" height="34.4" fill="#5899da"/>
<rect x="799.65" y="402.2" width="1.78" height="34.4" fill="#19a979"/>
<rect x="802.22" y="409.0" width="1.78" height="27.6" fill="#5899da"/>
<rect x="804.00" y="409.0" width="1.78" height="27.6" fill="#19a979"/>
<rect x="806.57" y="399.6" width="1.78" height="37.0" fill="#5899da"/>
<rect x="808.35" y="399.6" width="1.78" height="37.0" fill="#19a979"/>
<rect x="810.93" y="400.1" width="1.78" height="36.5" fill="#5899da"/>
<rect x="812.71" y="400.1" width="1.78" height="36.5" fill="#19a979"/>
<rect x="815.28" y="400.6" width="1.78" height="36.0" fill="#5899da"/>
<rect x="817.06" y="400.6" width="1.78" height="36.0" fill="#19a979"/>
<rect x="819.63" y="403.3" width="1.78" height="33.3" fill="#5899da"/>
<rect x="821.41" y="403.3" width="1.78" height="33.3" fill="#19a979"/>
<rect x="823.99" y="400.0" width="1.78" height="36.6" fill="#5899da"/>
<rect x="825.77" y="400.0" width="1.78" height="36.6" fill="#19a979"/>
<rect x="828.34" y="408.0" width="1.78" height="28.6" fill="#5899da"/>
<rect x="830.12" y="408.0" width="1.78" height="28.6" fill="#19a979"/>
<rect x="832.69" y="402.2" width="1.78" height="34.4" fill="#5899da"/>
<rect x="834.47" y="402.2" width="1.78" height="34.4" fill="#19a979"/>
<rect x="837.04" y="403.8" width="1.78" height="32.8" fill="#5899da"/>
<rect x="838.82" y="403.8" width="1.78" height="32.8" fill="#19a979"/>
<rect x="841.40" y="402.2" width="1.78" height="34.4" fill="#5899da"/>
<rect x="843.18" y="402.2" width="1.78" height="34.4" fill="#19a979"/>
<rect x="845.75" y="399.6" width="1.78" height="37.0" fill="#5899da"/>
<rect x="847.53" y="399.6" width="1.78" height="37.0" fill="#19a979"/>
<rect x="850.10" y="403.8" width="1.78" height="32.8" fill="#5899da"/>
<rect x="851.88" y="403.8" width="1.78" height="32.8" fill="#19a979"/>
<rect x="854.46" y="367.9" width="1.78" height="68.7" fill="#5899da"/>
<rect x="856.24" y="367.9" width="1.78" height="68.7" fill="#19a979"/>
<rect x="858.81" y="368.9" width="1.78" height="67.7" fill="#5899da"/>
<rect x="860.59" y="368.9" width="1.78" height="67.7" fill="#19a979"/>
<rect x="863.16" y="368.2" width="1.78" height="68.4" fill="#5899da"/>
<rect x="864.94" y="368.2" width="1.78" height="68.4" fill="#19a979"/>
<rect x="867.52" y="368.2" width="1.78" height="68.4" fill="#5899da"/>
<rect x="869.30" y="368.2" width="1.78" height="68.4" fill="#19a979"/>
<rect x="871.87" y="370.9" width="1.78" height="65.7" fill="#5899da"/>
<rect x="873.65" y="370.9" width="1.78" height="65.7" fill="#19a979"/>
<rect x="876.22" y="368.2" width="1.78" height="68.4" fill="#5899da"/>
<rect x="878.00" y="368.2" width="1.78" height="68.4" fill="#19a979"/>
<rect x="880.58" y="370.9" width="1.78" height="65.7" fill="#5899da"/>
<rect x="882.36" y="370.9" width="1.78" height="65.7" fill="#19a979"/>
<rect x="884.93" y="368.2" width="1.78" height="68.4" fill="#5899da"/>
<rect x="886.71" y="368.2" width="1.78" height="68.4" fill="#19a979"/>
<rect x="889.28" y="368.2" width="1.78" height="68.4" fill="#5899da"/>
<rect x="891.06" y="368.2" width="1.78" height="68.4" fill="#19a979"/>
<rect x="893.63" y="368.2" width="1.78" height="68.4" fill="#5899da"/>
<rect x="895.41" y="368.2" width="1.78" height="68.4" fill="#19a979"/>
<rect x="897.99" y="370.9" width="1.78" height="65.7" fill="#5899da"/>
<rect x="899.77" y="370.9" width="1.78" height="65.7" fill="#19a979"/>
<rect x="902.34" y="368.2" width="1.78" height="68.4" fill="#5899da"/>
<rect x="904.12" y="368.2" width="1.78" height="68.4" fill="#19a979"/>
<rect x="906.69" y="371.9" width="1.78" height="64.7" fill="#5899da"/>
<rect x="908.47" y="371.9" width="1.78" height="64.7" fill="#19a979"/>
<rect x="911.05" y="369.5" width="1.78" height="67.1" fill="#5899da"/>
<rect x="912.83" y="369.5" width="1.78" height="67.1" fill="#19a979"/>
<rect x="61.8" y="436.6" width="853.4" height="0.9" fill="#a7b1bb"/>
<rect x="61.4" y="436.6" width="0.8" height="3.6" fill="#a7b1bb"/>
<rect x="244.2" y="436.6" width="0.8" height="3.6" fill="#a7b1bb"/>
<rect x="427.1" y="436.6" width="0.8" height="3.6" fill="#a7b1bb"/>
<rect x="609.9" y="436.6" width="0.8" height="3.6" fill="#a7b1bb"/>
<rect x="792.7" y="436.6" width="0.8" height="3.6" fill="#a7b1bb"/>
<rect x="914.6" y="436.6" width="0.8" height="3.6" fill="#a7b1bb"/>
<polyline points="63.80,404.4 68.15,411.0 72.51,409.5 76.86,408.8 81.21,404.0 85.57,404.7 89.92,407.3 94.27,408.8 98.62,412.1 102.98,414.3 107.33,408.5 111.68,415.0 116.04,408.5 120.39,415.0 124.74,410.3 129.10,407.9 133.45,408.7 137.80,414.2 142.16,414.2 146.51,410.3 150.86,407.2 155.21,405.3 159.57,420.5 163.92,391.4 168.27,402.8 172.63,404.0 176.98,405.3 181.33,410.4 185.69,409.0 190.04,404.7 194.39,405.3 198.74,402.1 203.10,410.4 207.45,408.5 211.80,405.3 216.16,393.9 220.51,386.1 224.86,392.7 229.22,401.5 233.57,403.4 237.92,406.6 242.28,412.9 246.63,428.2 250.98,429.5 255.33,430.3 259.69,429.0 264.04,427.6 268.39,426.3 272.75,426.8 277.10,424.4 281.45,426.3 285.81,426.1 290.16,426.5 294.51,424.8 298.87,420.2 303.22,421.5 307.57,427.8 311.92,428.2 316.28,427.8 320.63,422.9 324.98,424.4 329.34,422.6 333.69,422.6 338.04,426.5 342.40,428.2 346.75,429.3 351.10,428.6 355.46,423.9 359.81,417.9 364.16,414.9 368.51,422.9 372.87,422.5 377.22,422.0 381.57,422.0 385.93,421.5 390.28,421.0 394.63,421.0 398.99,423.2 403.34,424.5 407.69,425.5 412.04,425.1 416.40,423.2 420.75,421.0 425.10,422.0 429.46,421.0 433.81,417.7 438.16,418.0 442.52,418.7 446.87,417.4 451.22,417.4 455.58,419.8 459.93,418.2 464.28,417.4 468.63,417.4 472.99,420.6 477.34,417.4 481.69,417.4 486.05,417.4 490.40,429.3 494.75,430.0 499.11,430.0 503.46,430.0 507.81,430.0 512.17,430.0 516.52,430.0 520.87,430.2 525.22,431.0 529.58,431.0 533.93,430.0 538.28,429.4 542.64,428.5 546.99,429.0 551.34,413.4 555.70,409.2 560.05,408.4 564.40,406.5 568.76,405.3 573.11,410.4 577.46,413.1 581.81,409.2 586.17,409.8 590.52,404.5 594.87,407.0 599.23,410.4 603.58,406.3 607.93,406.5 612.29,412.0 616.64,415.0 620.99,417.6 625.34,417.0 629.70,416.6 634.05,410.3 638.40,405.5 642.76,412.0 647.11,419.2 651.46,407.6 655.82,416.6 660.17,410.3 664.52,413.0 668.88,416.6 673.23,402.0 677.58,400.0 681.93,403.3 686.29,395.4 690.64,397.0 694.99,397.5 699.35,390.1 703.70,404.3 708.05,407.5 712.41,392.7 716.76,406.4 721.11,395.4 725.47,398.0 729.82,400.1 734.17,366.6 738.52,366.5 742.88,366.7 747.23,366.7 751.58,365.2 755.94,366.9 760.29,365.2 764.64,366.0 769.00,366.2 773.35,366.6 777.70,364.9 782.06,366.0 786.41,365.6 790.76,364.6 795.11,402.0 799.47,400.0 803.82,403.3 808.17,395.4 812.53,397.0 816.88,397.5 821.23,390.1 825.59,404.3 829.94,407.5 834.29,392.7 838.64,406.4 843.00,395.4 847.35,398.0 851.70,400.1 856.06,366.6 860.41,366.5 864.76,366.7 869.12,366.7 873.47,365.2 877.82,366.9 882.18,365.2 886.53,366.0 890.88,366.2 895.23,366.6 899.59,364.9 903.94,366.0 908.29,365.6 912.65,364.6" fill="none" stroke="#e8743b" stroke-width="1.0"/><circle cx="63.80" cy="404.4" r="2.15" fill="#e8743b"/><circle cx="68.15" cy="411.0" r="2.15" fill="#e8743b"/><circle cx="72.51" cy="409.5" r="2.15" fill="#e8743b"/><circle cx="76.86" cy="408.8" r="2.15" fill="#e8743b"/><circle cx="81.21" cy="404.0" r="2.15" fill="#e8743b"/><circle cx="85.57" cy="404.7" r="2.15" fill="#e8743b"/><circle cx="89.92" cy="407.3" r="2.15" fill="#e8743b"/><circle cx="94.27" cy="408.8" r="2.15" fill="#e8743b"/><circle cx="98.62" cy="412.1" r="2.15" fill="#e8743b"/><circle cx="102.98" cy="414.3" r="2.15" fill="#e8743b"/><circle cx="107.33" cy="408.5" r="2.15" fill="#e8743b"/><circle cx="111.68" cy="415.0" r="2.15" fill="#e8743b"/><circle cx="116.04" cy="408.5" r="2.15" fill="#e8743b"/><circle cx="120.39" cy="415.0" r="2.15" fill="#e8743b"/><circle cx="124.74" cy="410.3" r="2.15" fill="#e8743b"/><circle cx="129.10" cy="407.9" r="2.15" fill="#e8743b"/><circle cx="133.45" cy="408.7" r="2.15" fill="#e8743b"/><circle cx="137.80" cy="414.2" r="2.15" fill="#e8743b"/><circle cx="142.16" cy="414.2" r="2.15" fill="#e8743b"/><circle cx="146.51" cy="410.3" r="2.15" fill="#e8743b"/><circle cx="150.86" cy="407.2" r="2.15" fill="#e8743b"/><circle cx="155.21" cy="405.3" r="2.15" fill="#e8743b"/><circle cx="159.57" cy="420.5" r="2.15" fill="#e8743b"/><circle cx="163.92" cy="391.4" r="2.15" fill="#e8743b"/><circle cx="168.27" cy="402.8" r="2.15" fill="#e8743b"/><circle cx="172.63" cy="404.0" r="2.15" fill="#e8743b"/><circle cx="176.98" cy="405.3" r="2.15" fill="#e8743b"/><circle cx="181.33" cy="410.4" r="2.15" fill="#e8743b"/><circle cx="185.69" cy="409.0" r="2.15" fill="#e8743b"/><circle cx="190.04" cy="404.7" r="2.15" fill="#e8743b"/><circle cx="194.39" cy="405.3" r="2.15" fill="#e8743b"/><circle cx="198.74" cy="402.1" r="2.15" fill="#e8743b"/><circle cx="203.10" cy="410.4" r="2.15" fill="#e8743b"/><circle cx="207.45" cy="408.5" r="2.15" fill="#e8743b"/><circle cx="211.80" cy="405.3" r="2.15" fill="#e8743b"/><circle cx="216.16" cy="393.9" r="2.15" fill="#e8743b"/><circle cx="220.51" cy="386.1" r="2.15" fill="#e8743b"/><circle cx="224.86" cy="392.7" r="2.15" fill="#e8743b"/><circle cx="229.22" cy="401.5" r="2.15" fill="#e8743b"/><circle cx="233.57" cy="403.4" r="2.15" fill="#e8743b"/><circle cx="237.92" cy="406.6" r="2.15" fill="#e8743b"/><circle cx="242.28" cy="412.9" r="2.15" fill="#e8743b"/><circle cx="246.63" cy="428.2" r="2.15" fill="#e8743b"/><circle cx="250.98" cy="429.5" r="2.15" fill="#e8743b"/><circle cx="255.33" cy="430.3" r="2.15" fill="#e8743b"/><circle cx="259.69" cy="429.0" r="2.15" fill="#e8743b"/><circle cx="264.04" cy="427.6" r="2.15" fill="#e8743b"/><circle cx="268.39" cy="426.3" r="2.15" fill="#e8743b"/><circle cx="272.75" cy="426.8" r="2.15" fill="#e8743b"/><circle cx="277.10" cy="424.4" r="2.15" fill="#e8743b"/><circle cx="281.45" cy="426.3" r="2.15" fill="#e8743b"/><circle cx="285.81" cy="426.1" r="2.15" fill="#e8743b"/><circle cx="290.16" cy="426.5" r="2.15" fill="#e8743b"/><circle cx="294.51" cy="424.8" r="2.15" fill="#e8743b"/><circle cx="298.87" cy="420.2" r="2.15" fill="#e8743b"/><circle cx="303.22" cy="421.5" r="2.15" fill="#e8743b"/><circle cx="307.57" cy="427.8" r="2.15" fill="#e8743b"/><circle cx="311.92" cy="428.2" r="2.15" fill="#e8743b"/><circle cx="316.28" cy="427.8" r="2.15" fill="#e8743b"/><circle cx="320.63" cy="422.9" r="2.15" fill="#e8743b"/><circle cx="324.98" cy="424.4" r="2.15" fill="#e8743b"/><circle cx="329.34" cy="422.6" r="2.15" fill="#e8743b"/><circle cx="333.69" cy="422.6" r="2.15" fill="#e8743b"/><circle cx="338.04" cy="426.5" r="2.15" fill="#e8743b"/><circle cx="342.40" cy="428.2" r="2.15" fill="#e8743b"/><circle cx="346.75" cy="429.3" r="2.15" fill="#e8743b"/><circle cx="351.10" cy="428.6" r="2.15" fill="#e8743b"/><circle cx="355.46" cy="423.9" r="2.15" fill="#e8743b"/><circle cx="359.81" cy="417.9" r="2.15" fill="#e8743b"/><circle cx="364.16" cy="414.9" r="2.15" fill="#e8743b"/><circle cx="368.51" cy="422.9" r="2.15" fill="#e8743b"/><circle cx="372.87" cy="422.5" r="2.15" fill="#e8743b"/><circle cx="377.22" cy="422.0" r="2.15" fill="#e8743b"/><circle cx="381.57" cy="422.0" r="2.15" fill="#e8743b"/><circle cx="385.93" cy="421.5" r="2.15" fill="#e8743b"/><circle cx="390.28" cy="421.0" r="2.15" fill="#e8743b"/><circle cx="394.63" cy="421.0" r="2.15" fill="#e8743b"/><circle cx="398.99" cy="423.2" r="2.15" fill="#e8743b"/><circle cx="403.34" cy="424.5" r="2.15" fill="#e8743b"/><circle cx="407.69" cy="425.5" r="2.15" fill="#e8743b"/><circle cx="412.04" cy="425.1" r="2.15" fill="#e8743b"/><circle cx="416.40" cy="423.2" r="2.15" fill="#e8743b"/><circle cx="420.75" cy="421.0" r="2.15" fill="#e8743b"/><circle cx="425.10" cy="422.0" r="2.15" fill="#e8743b"/><circle cx="429.46" cy="421.0" r="2.15" fill="#e8743b"/><circle cx="433.81" cy="417.7" r="2.15" fill="#e8743b"/><circle cx="438.16" cy="418.0" r="2.15" fill="#e8743b"/><circle cx="442.52" cy="418.7" r="2.15" fill="#e8743b"/><circle cx="446.87" cy="417.4" r="2.15" fill="#e8743b"/><circle cx="451.22" cy="417.4" r="2.15" fill="#e8743b"/><circle cx="455.58" cy="419.8" r="2.15" fill="#e8743b"/><circle cx="459.93" cy="418.2" r="2.15" fill="#e8743b"/><circle cx="464.28" cy="417.4" r="2.15" fill="#e8743b"/><circle cx="468.63" cy="417.4" r="2.15" fill="#e8743b"/><circle cx="472.99" cy="420.6" r="2.15" fill="#e8743b"/><circle cx="477.34" cy="417.4" r="2.15" fill="#e8743b"/><circle cx="481.69" cy="417.4" r="2.15" fill="#e8743b"/><circle cx="486.05" cy="417.4" r="2.15" fill="#e8743b"/><circle cx="490.40" cy="429.3" r="2.15" fill="#e8743b"/><circle cx="494.75" cy="430.0" r="2.15" fill="#e8743b"/><circle cx="499.11" cy="430.0" r="2.15" fill="#e8743b"/><circle cx="503.46" cy="430.0" r="2.15" fill="#e8743b"/><circle cx="507.81" cy="430.0" r="2.15" fill="#e8743b"/><circle cx="512.17" cy="430.0" r="2.15" fill="#e8743b"/><circle cx="516.52" cy="430.0" r="2.15" fill="#e8743b"/><circle cx="520.87" cy="430.2" r="2.15" fill="#e8743b"/><circle cx="525.22" cy="431.0" r="2.15" fill="#e8743b"/><circle cx="529.58" cy="431.0" r="2.15" fill="#e8743b"/><circle cx="533.93" cy="430.0" r="2.15" fill="#e8743b"/><circle cx="538.28" cy="429.4" r="2.15" fill="#e8743b"/><circle cx="542.64" cy="428.5" r="2.15" fill="#e8743b"/><circle cx="546.99" cy="429.0" r="2.15" fill="#e8743b"/><circle cx="551.34" cy="413.4" r="2.15" fill="#e8743b"/><circle cx="555.70" cy="409.2" r="2.15" fill="#e8743b"/><circle cx="560.05" cy="408.4" r="2.15" fill="#e8743b"/><circle cx="564.40" cy="406.5" r="2.15" fill="#e8743b"/><circle cx="568.76" cy="405.3" r="2.15" fill="#e8743b"/><circle cx="573.11" cy="410.4" r="2.15" fill="#e8743b"/><circle cx="577.46" cy="413.1" r="2.15" fill="#e8743b"/><circle cx="581.81" cy="409.2" r="2.15" fill="#e8743b"/><circle cx="586.17" cy="409.8" r="2.15" fill="#e8743b"/><circle cx="590.52" cy="404.5" r="2.15" fill="#e8743b"/><circle cx="594.87" cy="407.0" r="2.15" fill="#e8743b"/><circle cx="599.23" cy="410.4" r="2.15" fill="#e8743b"/><circle cx="603.58" cy="406.3" r="2.15" fill="#e8743b"/><circle cx="607.93" cy="406.5" r="2.15" fill="#e8743b"/><circle cx="612.29" cy="412.0" r="2.15" fill="#e8743b"/><circle cx="616.64" cy="415.0" r="2.15" fill="#e8743b"/><circle cx="620.99" cy="417.6" r="2.15" fill="#e8743b"/><circle cx="625.34" cy="417.0" r="2.15" fill="#e8743b"/><circle cx="629.70" cy="416.6" r="2.15" fill="#e8743b"/><circle cx="634.05" cy="410.3" r="2.15" fill="#e8743b"/><circle cx="638.40" cy="405.5" r="2.15" fill="#e8743b"/><circle cx="642.76" cy="412.0" r="2.15" fill="#e8743b"/><circle cx="647.11" cy="419.2" r="2.15" fill="#e8743b"/><circle cx="651.46" cy="407.6" r="2.15" fill="#e8743b"/><circle cx="655.82" cy="416.6" r="2.15" fill="#e8743b"/><circle cx="660.17" cy="410.3" r="2.15" fill="#e8743b"/><circle cx="664.52" cy="413.0" r="2.15" fill="#e8743b"/><circle cx="668.88" cy="416.6" r="2.15" fill="#e8743b"/><circle cx="673.23" cy="402.0" r="2.15" fill="#e8743b"/><circle cx="677.58" cy="400.0" r="2.15" fill="#e8743b"/><circle cx="681.93" cy="403.3" r="2.15" fill="#e8743b"/><circle cx="686.29" cy="395.4" r="2.15" fill="#e8743b"/><circle cx="690.64" cy="397.0" r="2.15" fill="#e8743b"/><circle cx="694.99" cy="397.5" r="2.15" fill="#e8743b"/><circle cx="699.35" cy="390.1" r="2.15" fill="#e8743b"/><circle cx="703.70" cy="404.3" r="2.15" fill="#e8743b"/><circle cx="708.05" cy="407.5" r="2.15" fill="#e8743b"/><circle cx="712.41" cy="392.7" r="2.15" fill="#e8743b"/><circle cx="716.76" cy="406.4" r="2.15" fill="#e8743b"/><circle cx="721.11" cy="395.4" r="2.15" fill="#e8743b"/><circle cx="725.47" cy="398.0" r="2.15" fill="#e8743b"/><circle cx="729.82" cy="400.1" r="2.15" fill="#e8743b"/><circle cx="734.17" cy="366.6" r="2.15" fill="#e8743b"/><circle cx="738.52" cy="366.5" r="2.15" fill="#e8743b"/><circle cx="742.88" cy="366.7" r="2.15" fill="#e8743b"/><circle cx="747.23" cy="366.7" r="2.15" fill="#e8743b"/><circle cx="751.58" cy="365.2" r="2.15" fill="#e8743b"/><circle cx="755.94" cy="366.9" r="2.15" fill="#e8743b"/><circle cx="760.29" cy="365.2" r="2.15" fill="#e8743b"/><circle cx="764.64" cy="366.0" r="2.15" fill="#e8743b"/><circle cx="769.00" cy="366.2" r="2.15" fill="#e8743b"/><circle cx="773.35" cy="366.6" r="2.15" fill="#e8743b"/><circle cx="777.70" cy="364.9" r="2.15" fill="#e8743b"/><circle cx="782.06" cy="366.0" r="2.15" fill="#e8743b"/><circle cx="786.41" cy="365.6" r="2.15" fill="#e8743b"/><circle cx="790.76" cy="364.6" r="2.15" fill="#e8743b"/><circle cx="795.11" cy="402.0" r="2.15" fill="#e8743b"/><circle cx="799.47" cy="400.0" r="2.15" fill="#e8743b"/><circle cx="803.82" cy="403.3" r="2.15" fill="#e8743b"/><circle cx="808.17" cy="395.4" r="2.15" fill="#e8743b"/><circle cx="812.53" cy="397.0" r="2.15" fill="#e8743b"/><circle cx="816.88" cy="397.5" r="2.15" fill="#e8743b"/><circle cx="821.23" cy="390.1" r="2.15" fill="#e8743b"/><circle cx="825.59" cy="404.3" r="2.15" fill="#e8743b"/><circle cx="829.94" cy="407.5" r="2.15" fill="#e8743b"/><circle cx="834.29" cy="392.7" r="2.15" fill="#e8743b"/><circle cx="838.64" cy="406.4" r="2.15" fill="#e8743b"/><circle cx="843.00" cy="395.4" r="2.15" fill="#e8743b"/><circle cx="847.35" cy="398.0" r="2.15" fill="#e8743b"/><circle cx="851.70" cy="400.1" r="2.15" fill="#e8743b"/><circle cx="856.06" cy="366.6" r="2.15" fill="#e8743b"/><circle cx="860.41" cy="366.5" r="2.15" fill="#e8743b"/><circle cx="864.76" cy="366.7" r="2.15" fill="#e8743b"/><circle cx="869.12" cy="366.7" r="2.15" fill="#e8743b"/><circle cx="873.47" cy="365.2" r="2.15" fill="#e8743b"/><circle cx="877.82" cy="366.9" r="2.15" fill="#e8743b"/><circle cx="882.18" cy="365.2" r="2.15" fill="#e8743b"/><circle cx="886.53" cy="366.0" r="2.15" fill="#e8743b"/><circle cx="890.88" cy="366.2" r="2.15" fill="#e8743b"/><circle cx="895.23" cy="366.6" r="2.15" fill="#e8743b"/><circle cx="899.59" cy="364.9" r="2.15" fill="#e8743b"/><circle cx="903.94" cy="366.0" r="2.15" fill="#e8743b"/><circle cx="908.29" cy="365.6" r="2.15" fill="#e8743b"/><circle cx="912.65" cy="364.6" r="2.15" fill="#e8743b"/>
<polyline points="63.80,408.0 68.15,407.7 72.51,409.7 76.86,408.8 81.21,407.7 85.57,407.3 89.92,409.9 94.27,409.1 98.62,407.7 102.98,409.5 107.33,409.3 111.68,407.9 116.04,407.1 120.39,407.9 124.74,403.2 129.10,404.4 133.45,402.9 137.80,403.5 142.16,404.4 146.51,404.4 150.86,402.1 155.21,401.3 159.57,399.6 163.92,404.7 168.27,404.3 172.63,400.9 176.98,400.3 181.33,401.8 185.69,407.6 190.04,406.3 194.39,408.5 198.74,406.3 203.10,406.3 207.45,404.7 211.80,406.3 216.16,407.6 220.51,408.5 224.86,407.2 229.22,405.0 233.57,405.3 237.92,407.6 242.28,408.5 246.63,418.4 250.98,420.0 255.33,420.2 259.69,419.2 264.04,417.5 268.39,417.3 272.75,415.3 277.10,417.9 281.45,418.7 285.81,418.4 290.16,418.7 294.51,417.5 298.87,415.2 303.22,417.3 307.57,415.2 311.92,415.2 316.28,415.2 320.63,415.2 324.98,412.8 329.34,412.8 333.69,414.3 338.04,412.8 342.40,412.8 346.75,413.8 351.10,414.4 355.46,412.5 359.81,415.4 364.16,413.9 368.51,419.4 372.87,420.4 377.22,421.3 381.57,419.8 385.93,419.6 390.28,417.7 394.63,419.4 398.99,418.2 403.34,419.4 407.69,420.1 412.04,418.7 416.40,418.2 420.75,417.7 425.10,419.4 429.46,415.4 433.81,412.5 438.16,413.5 442.52,415.4 446.87,414.5 451.22,413.2 455.58,413.2 459.93,414.7 464.28,412.5 468.63,413.2 472.99,413.9 477.34,413.2 481.69,412.5 486.05,413.2 490.40,425.2 494.75,425.8 499.11,427.0 503.46,425.8 507.81,425.8 512.17,425.2 516.52,427.0 520.87,425.8 525.22,426.4 529.58,425.8 533.93,426.4 538.28,425.8 542.64,425.2 546.99,426.4 551.34,400.4 555.70,399.8 560.05,401.0 564.40,402.7 568.76,399.4 573.11,401.0 577.46,401.5 581.81,403.3 586.17,399.8 590.52,398.0 594.87,402.7 599.23,403.0 603.58,399.2 607.93,399.2 612.29,415.5 616.64,409.4 620.99,421.3 625.34,418.2 629.70,419.5 634.05,418.2 638.40,416.1 642.76,418.5 647.11,414.3 651.46,417.1 655.82,420.3 660.17,417.1 664.52,417.8 668.88,420.6 673.23,402.0 677.58,397.8 681.93,406.9 686.29,402.0 690.64,401.7 694.99,406.4 699.35,397.3 703.70,407.5 708.05,402.0 712.41,405.6 716.76,403.8 721.11,406.4 725.47,405.6 729.82,410.1 734.17,363.3 738.52,366.2 742.88,362.9 747.23,363.3 751.58,368.2 755.94,363.6 760.29,368.2 764.64,364.9 769.00,362.3 773.35,363.3 777.70,368.5 782.06,365.6 786.41,369.5 790.76,366.9 795.11,402.0 799.47,397.8 803.82,406.9 808.17,402.0 812.53,401.7 816.88,406.4 821.23,397.3 825.59,407.5 829.94,402.0 834.29,405.6 838.64,403.8 843.00,406.4 847.35,405.6 851.70,410.1 856.06,363.3 860.41,366.2 864.76,362.9 869.12,363.3 873.47,368.2 877.82,363.6 882.18,368.2 886.53,364.9 890.88,362.3 895.23,363.3 899.59,368.5 903.94,365.6 908.29,369.5 912.65,366.9" fill="none" stroke="#e0237f" stroke-width="1.0"/><circle cx="63.80" cy="408.0" r="2.15" fill="#e0237f"/><circle cx="68.15" cy="407.7" r="2.15" fill="#e0237f"/><circle cx="72.51" cy="409.7" r="2.15" fill="#e0237f"/><circle cx="76.86" cy="408.8" r="2.15" fill="#e0237f"/><circle cx="81.21" cy="407.7" r="2.15" fill="#e0237f"/><circle cx="85.57" cy="407.3" r="2.15" fill="#e0237f"/><circle cx="89.92" cy="409.9" r="2.15" fill="#e0237f"/><circle cx="94.27" cy="409.1" r="2.15" fill="#e0237f"/><circle cx="98.62" cy="407.7" r="2.15" fill="#e0237f"/><circle cx="102.98" cy="409.5" r="2.15" fill="#e0237f"/><circle cx="107.33" cy="409.3" r="2.15" fill="#e0237f"/><circle cx="111.68" cy="407.9" r="2.15" fill="#e0237f"/><circle cx="116.04" cy="407.1" r="2.15" fill="#e0237f"/><circle cx="120.39" cy="407.9" r="2.15" fill="#e0237f"/><circle cx="124.74" cy="403.2" r="2.15" fill="#e0237f"/><circle cx="129.10" cy="404.4" r="2.15" fill="#e0237f"/><circle cx="133.45" cy="402.9" r="2.15" fill="#e0237f"/><circle cx="137.80" cy="403.5" r="2.15" fill="#e0237f"/><circle cx="142.16" cy="404.4" r="2.15" fill="#e0237f"/><circle cx="146.51" cy="404.4" r="2.15" fill="#e0237f"/><circle cx="150.86" cy="402.1" r="2.15" fill="#e0237f"/><circle cx="155.21" cy="401.3" r="2.15" fill="#e0237f"/><circle cx="159.57" cy="399.6" r="2.15" fill="#e0237f"/><circle cx="163.92" cy="404.7" r="2.15" fill="#e0237f"/><circle cx="168.27" cy="404.3" r="2.15" fill="#e0237f"/><circle cx="172.63" cy="400.9" r="2.15" fill="#e0237f"/><circle cx="176.98" cy="400.3" r="2.15" fill="#e0237f"/><circle cx="181.33" cy="401.8" r="2.15" fill="#e0237f"/><circle cx="185.69" cy="407.6" r="2.15" fill="#e0237f"/><circle cx="190.04" cy="406.3" r="2.15" fill="#e0237f"/><circle cx="194.39" cy="408.5" r="2.15" fill="#e0237f"/><circle cx="198.74" cy="406.3" r="2.15" fill="#e0237f"/><circle cx="203.10" cy="406.3" r="2.15" fill="#e0237f"/><circle cx="207.45" cy="404.7" r="2.15" fill="#e0237f"/><circle cx="211.80" cy="406.3" r="2.15" fill="#e0237f"/><circle cx="216.16" cy="407.6" r="2.15" fill="#e0237f"/><circle cx="220.51" cy="408.5" r="2.15" fill="#e0237f"/><circle cx="224.86" cy="407.2" r="2.15" fill="#e0237f"/><circle cx="229.22" cy="405.0" r="2.15" fill="#e0237f"/><circle cx="233.57" cy="405.3" r="2.15" fill="#e0237f"/><circle cx="237.92" cy="407.6" r="2.15" fill="#e0237f"/><circle cx="242.28" cy="408.5" r="2.15" fill="#e0237f"/><circle cx="246.63" cy="418.4" r="2.15" fill="#e0237f"/><circle cx="250.98" cy="420.0" r="2.15" fill="#e0237f"/><circle cx="255.33" cy="420.2" r="2.15" fill="#e0237f"/><circle cx="259.69" cy="419.2" r="2.15" fill="#e0237f"/><circle cx="264.04" cy="417.5" r="2.15" fill="#e0237f"/><circle cx="268.39" cy="417.3" r="2.15" fill="#e0237f"/><circle cx="272.75" cy="415.3" r="2.15" fill="#e0237f"/><circle cx="277.10" cy="417.9" r="2.15" fill="#e0237f"/><circle cx="281.45" cy="418.7" r="2.15" fill="#e0237f"/><circle cx="285.81" cy="418.4" r="2.15" fill="#e0237f"/><circle cx="290.16" cy="418.7" r="2.15" fill="#e0237f"/><circle cx="294.51" cy="417.5" r="2.15" fill="#e0237f"/><circle cx="298.87" cy="415.2" r="2.15" fill="#e0237f"/><circle cx="303.22" cy="417.3" r="2.15" fill="#e0237f"/><circle cx="307.57" cy="415.2" r="2.15" fill="#e0237f"/><circle cx="311.92" cy="415.2" r="2.15" fill="#e0237f"/><circle cx="316.28" cy="415.2" r="2.15" fill="#e0237f"/><circle cx="320.63" cy="415.2" r="2.15" fill="#e0237f"/><circle cx="324.98" cy="412.8" r="2.15" fill="#e0237f"/><circle cx="329.34" cy="412.8" r="2.15" fill="#e0237f"/><circle cx="333.69" cy="414.3" r="2.15" fill="#e0237f"/><circle cx="338.04" cy="412.8" r="2.15" fill="#e0237f"/><circle cx="342.40" cy="412.8" r="2.15" fill="#e0237f"/><circle cx="346.75" cy="413.8" r="2.15" fill="#e0237f"/><circle cx="351.10" cy="414.4" r="2.15" fill="#e0237f"/><circle cx="355.46" cy="412.5" r="2.15" fill="#e0237f"/><circle cx="359.81" cy="415.4" r="2.15" fill="#e0237f"/><circle cx="364.16" cy="413.9" r="2.15" fill="#e0237f"/><circle cx="368.51" cy="419.4" r="2.15" fill="#e0237f"/><circle cx="372.87" cy="420.4" r="2.15" fill="#e0237f"/><circle cx="377.22" cy="421.3" r="2.15" fill="#e0237f"/><circle cx="381.57" cy="419.8" r="2.15" fill="#e0237f"/><circle cx="385.93" cy="419.6" r="2.15" fill="#e0237f"/><circle cx="390.28" cy="417.7" r="2.15" fill="#e0237f"/><circle cx="394.63" cy="419.4" r="2.15" fill="#e0237f"/><circle cx="398.99" cy="418.2" r="2.15" fill="#e0237f"/><circle cx="403.34" cy="419.4" r="2.15" fill="#e0237f"/><circle cx="407.69" cy="420.1" r="2.15" fill="#e0237f"/><circle cx="412.04" cy="418.7" r="2.15" fill="#e0237f"/><circle cx="416.40" cy="418.2" r="2.15" fill="#e0237f"/><circle cx="420.75" cy="417.7" r="2.15" fill="#e0237f"/><circle cx="425.10" cy="419.4" r="2.15" fill="#e0237f"/><circle cx="429.46" cy="415.4" r="2.15" fill="#e0237f"/><circle cx="433.81" cy="412.5" r="2.15" fill="#e0237f"/><circle cx="438.16" cy="413.5" r="2.15" fill="#e0237f"/><circle cx="442.52" cy="415.4" r="2.15" fill="#e0237f"/><circle cx="446.87" cy="414.5" r="2.15" fill="#e0237f"/><circle cx="451.22" cy="413.2" r="2.15" fill="#e0237f"/><circle cx="455.58" cy="413.2" r="2.15" fill="#e0237f"/><circle cx="459.93" cy="414.7" r="2.15" fill="#e0237f"/><circle cx="464.28" cy="412.5" r="2.15" fill="#e0237f"/><circle cx="468.63" cy="413.2" r="2.15" fill="#e0237f"/><circle cx="472.99" cy="413.9" r="2.15" fill="#e0237f"/><circle cx="477.34" cy="413.2" r="2.15" fill="#e0237f"/><circle cx="481.69" cy="412.5" r="2.15" fill="#e0237f"/><circle cx="486.05" cy="413.2" r="2.15" fill="#e0237f"/><circle cx="490.40" cy="425.2" r="2.15" fill="#e0237f"/><circle cx="494.75" cy="425.8" r="2.15" fill="#e0237f"/><circle cx="499.11" cy="427.0" r="2.15" fill="#e0237f"/><circle cx="503.46" cy="425.8" r="2.15" fill="#e0237f"/><circle cx="507.81" cy="425.8" r="2.15" fill="#e0237f"/><circle cx="512.17" cy="425.2" r="2.15" fill="#e0237f"/><circle cx="516.52" cy="427.0" r="2.15" fill="#e0237f"/><circle cx="520.87" cy="425.8" r="2.15" fill="#e0237f"/><circle cx="525.22" cy="426.4" r="2.15" fill="#e0237f"/><circle cx="529.58" cy="425.8" r="2.15" fill="#e0237f"/><circle cx="533.93" cy="426.4" r="2.15" fill="#e0237f"/><circle cx="538.28" cy="425.8" r="2.15" fill="#e0237f"/><circle cx="542.64" cy="425.2" r="2.15" fill="#e0237f"/><circle cx="546.99" cy="426.4" r="2.15" fill="#e0237f"/><circle cx="551.34" cy="400.4" r="2.15" fill="#e0237f"/><circle cx="555.70" cy="399.8" r="2.15" fill="#e0237f"/><circle cx="560.05" cy="401.0" r="2.15" fill="#e0237f"/><circle cx="564.40" cy="402.7" r="2.15" fill="#e0237f"/><circle cx="568.76" cy="399.4" r="2.15" fill="#e0237f"/><circle cx="573.11" cy="401.0" r="2.15" fill="#e0237f"/><circle cx="577.46" cy="401.5" r="2.15" fill="#e0237f"/><circle cx="581.81" cy="403.3" r="2.15" fill="#e0237f"/><circle cx="586.17" cy="399.8" r="2.15" fill="#e0237f"/><circle cx="590.52" cy="398.0" r="2.15" fill="#e0237f"/><circle cx="594.87" cy="402.7" r="2.15" fill="#e0237f"/><circle cx="599.23" cy="403.0" r="2.15" fill="#e0237f"/><circle cx="603.58" cy="399.2" r="2.15" fill="#e0237f"/><circle cx="607.93" cy="399.2" r="2.15" fill="#e0237f"/><circle cx="612.29" cy="415.5" r="2.15" fill="#e0237f"/><circle cx="616.64" cy="409.4" r="2.15" fill="#e0237f"/><circle cx="620.99" cy="421.3" r="2.15" fill="#e0237f"/><circle cx="625.34" cy="418.2" r="2.15" fill="#e0237f"/><circle cx="629.70" cy="419.5" r="2.15" fill="#e0237f"/><circle cx="634.05" cy="418.2" r="2.15" fill="#e0237f"/><circle cx="638.40" cy="416.1" r="2.15" fill="#e0237f"/><circle cx="642.76" cy="418.5" r="2.15" fill="#e0237f"/><circle cx="647.11" cy="414.3" r="2.15" fill="#e0237f"/><circle cx="651.46" cy="417.1" r="2.15" fill="#e0237f"/><circle cx="655.82" cy="420.3" r="2.15" fill="#e0237f"/><circle cx="660.17" cy="417.1" r="2.15" fill="#e0237f"/><circle cx="664.52" cy="417.8" r="2.15" fill="#e0237f"/><circle cx="668.88" cy="420.6" r="2.15" fill="#e0237f"/><circle cx="673.23" cy="402.0" r="2.15" fill="#e0237f"/><circle cx="677.58" cy="397.8" r="2.15" fill="#e0237f"/><circle cx="681.93" cy="406.9" r="2.15" fill="#e0237f"/><circle cx="686.29" cy="402.0" r="2.15" fill="#e0237f"/><circle cx="690.64" cy="401.7" r="2.15" fill="#e0237f"/><circle cx="694.99" cy="406.4" r="2.15" fill="#e0237f"/><circle cx="699.35" cy="397.3" r="2.15" fill="#e0237f"/><circle cx="703.70" cy="407.5" r="2.15" fill="#e0237f"/><circle cx="708.05" cy="402.0" r="2.15" fill="#e0237f"/><circle cx="712.41" cy="405.6" r="2.15" fill="#e0237f"/><circle cx="716.76" cy="403.8" r="2.15" fill="#e0237f"/><circle cx="721.11" cy="406.4" r="2.15" fill="#e0237f"/><circle cx="725.47" cy="405.6" r="2.15" fill="#e0237f"/><circle cx="729.82" cy="410.1" r="2.15" fill="#e0237f"/><circle cx="734.17" cy="363.3" r="2.15" fill="#e0237f"/><circle cx="738.52" cy="366.2" r="2.15" fill="#e0237f"/><circle cx="742.88" cy="362.9" r="2.15" fill="#e0237f"/><circle cx="747.23" cy="363.3" r="2.15" fill="#e0237f"/><circle cx="751.58" cy="368.2" r="2.15" fill="#e0237f"/><circle cx="755.94" cy="363.6" r="2.15" fill="#e0237f"/><circle cx="760.29" cy="368.2" r="2.15" fill="#e0237f"/><circle cx="764.64" cy="364.9" r="2.15" fill="#e0237f"/><circle cx="769.00" cy="362.3" r="2.15" fill="#e0237f"/><circle cx="773.35" cy="363.3" r="2.15" fill="#e0237f"/><circle cx="777.70" cy="368.5" r="2.15" fill="#e0237f"/><circle cx="782.06" cy="365.6" r="2.15" fill="#e0237f"/><circle cx="786.41" cy="369.5" r="2.15" fill="#e0237f"/><circle cx="790.76" cy="366.9" r="2.15" fill="#e0237f"/><circle cx="795.11" cy="402.0" r="2.15" fill="#e0237f"/><circle cx="799.47" cy="397.8" r="2.15" fill="#e0237f"/><circle cx="803.82" cy="406.9" r="2.15" fill="#e0237f"/><circle cx="808.17" cy="402.0" r="2.15" fill="#e0237f"/><circle cx="812.53" cy="401.7" r="2.15" fill="#e0237f"/><circle cx="816.88" cy="406.4" r="2.15" fill="#e0237f"/><circle cx="821.23" cy="397.3" r="2.15" fill="#e0237f"/><circle cx="825.59" cy="407.5" r="2.15" fill="#e0237f"/><circle cx="829.94" cy="402.0" r="2.15" fill="#e0237f"/><circle cx="834.29" cy="405.6" r="2.15" fill="#e0237f"/><circle cx="838.64" cy="403.8" r="2.15" fill="#e0237f"/><circle cx="843.00" cy="406.4" r="2.15" fill="#e0237f"/><circle cx="847.35" cy="405.6" r="2.15" fill="#e0237f"/><circle cx="851.70" cy="410.1" r="2.15" fill="#e0237f"/><circle cx="856.06" cy="363.3" r="2.15" fill="#e0237f"/><circle cx="860.41" cy="366.2" r="2.15" fill="#e0237f"/><circle cx="864.76" cy="362.9" r="2.15" fill="#e0237f"/><circle cx="869.12" cy="363.3" r="2.15" fill="#e0237f"/><circle cx="873.47" cy="368.2" r="2.15" fill="#e0237f"/><circle cx="877.82" cy="363.6" r="2.15" fill="#e0237f"/><circle cx="882.18" cy="368.2" r="2.15" fill="#e0237f"/><circle cx="886.53" cy="364.9" r="2.15" fill="#e0237f"/><circle cx="890.88" cy="362.3" r="2.15" fill="#e0237f"/><circle cx="895.23" cy="363.3" r="2.15" fill="#e0237f"/><circle cx="899.59" cy="368.5" r="2.15" fill="#e0237f"/><circle cx="903.94" cy="365.6" r="2.15" fill="#e0237f"/><circle cx="908.29" cy="369.5" r="2.15" fill="#e0237f"/><circle cx="912.65" cy="366.9" r="2.15" fill="#e0237f"/>
</svg>
<div class="t" style="left:-244.70px;width:300px;text-align:right;top:332.02px;font-size:6.55px;line-height:9.17px;color:#8392a1;font-weight:normal;">4,000</div>
<div class="t" style="left:-244.70px;width:300px;text-align:right;top:382.62px;font-size:6.55px;line-height:9.17px;color:#8392a1;font-weight:normal;">2,000</div>
<div class="t" style="left:-244.70px;width:300px;text-align:right;top:432.22px;font-size:6.55px;line-height:9.17px;color:#8392a1;font-weight:normal;">0</div>
<div class="t" style="left:-29.2px;top:381.6px;width:120px;height:10px;line-height:10px;text-align:center;font-size:7.2px;color:#3e4a57;transform:rotate(-90deg);transform-origin:60px 5px">Local Demand Plan Qty Fina...</div>
<div class="t" style="left:2.70px;width:300px;text-align:center;top:439.81px;font-size:6.56px;line-height:9.18px;color:#1d2d3e;font-weight:bold;">FAMILY 100-HEADPHONES</div>
<div class="t" style="left:186.20px;width:300px;text-align:center;top:439.81px;font-size:6.56px;line-height:9.18px;color:#1d2d3e;font-weight:bold;">FAMILY 200-HOME THEATER</div>
<div class="t" style="left:368.60px;width:300px;text-align:center;top:439.81px;font-size:6.56px;line-height:9.18px;color:#1d2d3e;font-weight:bold;">FAMILY 300-MUSIC DOCKS</div>
<div class="t" style="left:551.40px;width:300px;text-align:center;top:439.81px;font-size:6.56px;line-height:9.18px;color:#1d2d3e;font-weight:bold;">FAMILY 400-SMARTPHONES</div>
<div class="t" style="left:703.60px;width:300px;text-align:center;top:439.81px;font-size:6.56px;line-height:9.18px;color:#1d2d3e;font-weight:bold;">FAMILY 500-TRADING</div>
<div class="t" style="left:421px;top:460.90000000000003px;line-height:10px;font-size:7.15px;color:#5a6f86"><span style="color:#2b3845">Product Family</span> / Customer Region / Week</div>
<div class="t" style="left:-68.70px;width:300px;text-align:center;top:394.87px;font-size:6.47px;line-height:9.06px;color:#1f2433;font-weight:normal;">1,238</div>
<div class="t" style="left:-81.90px;width:300px;text-align:center;top:412.27px;font-size:6.47px;line-height:9.06px;color:#1f2433;font-weight:normal;">963</div>
<div class="t" style="left:-60.50px;width:300px;text-align:center;top:412.27px;font-size:6.47px;line-height:9.06px;color:#1f2433;font-weight:normal;">1,047</div>
<div class="t" style="left:-43.00px;width:300px;text-align:center;top:399.17px;font-size:6.47px;line-height:9.06px;color:#1f2433;font-weight:normal;">1,071</div>
<div class="t" style="left:-38.70px;width:300px;text-align:center;top:416.67px;font-size:6.47px;line-height:9.06px;color:#1f2433;font-weight:normal;">840</div>
<div class="t" style="left:-7.90px;width:300px;text-align:center;top:394.17px;font-size:6.47px;line-height:9.06px;color:#1f2433;font-weight:normal;">1,256</div>
<div class="t" style="left:-11.80px;width:300px;text-align:center;top:404.07px;font-size:6.47px;line-height:9.06px;color:#1f2433;font-weight:normal;">871</div>
<div class="t" style="left:27.10px;width:300px;text-align:center;top:389.87px;font-size:6.47px;line-height:9.06px;color:#1f2433;font-weight:normal;">1,422</div>
<div class="t" style="left:23.20px;width:300px;text-align:center;top:406.17px;font-size:6.47px;line-height:9.06px;color:#1f2433;font-weight:normal;">1,276</div>
<div class="t" style="left:43.70px;width:300px;text-align:center;top:410.37px;font-size:6.47px;line-height:9.06px;color:#1f2433;font-weight:normal;">1,106</div>
<div class="t" style="left:55.60px;width:300px;text-align:center;top:397.77px;font-size:6.47px;line-height:9.06px;color:#1f2433;font-weight:normal;">1,105</div>
<div class="t" style="left:82.40px;width:300px;text-align:center;top:381.97px;font-size:6.47px;line-height:9.06px;color:#1f2433;font-weight:normal;">1,738</div>
<div class="t" style="left:79.20px;width:300px;text-align:center;top:395.07px;font-size:6.47px;line-height:9.06px;color:#1f2433;font-weight:normal;">1,225</div>
<div class="t" style="left:109.50px;width:300px;text-align:center;top:408.37px;font-size:6.47px;line-height:9.06px;color:#1f2433;font-weight:normal;">672</div>
<div class="t" style="left:122.60px;width:300px;text-align:center;top:404.57px;font-size:6.47px;line-height:9.06px;color:#1f2433;font-weight:normal;">826</div>
<div class="t" style="left:135.80px;width:300px;text-align:center;top:407.67px;font-size:6.47px;line-height:9.06px;color:#1f2433;font-weight:normal;">710</div>
<div class="t" style="left:148.40px;width:300px;text-align:center;top:404.57px;font-size:6.47px;line-height:9.06px;color:#1f2433;font-weight:normal;">831</div>
<div class="t" style="left:109.50px;width:300px;text-align:center;top:419.07px;font-size:6.47px;line-height:9.06px;color:#1f2433;font-weight:normal;">282</div>
<div class="t" style="left:122.60px;width:300px;text-align:center;top:426.97px;font-size:6.47px;line-height:9.06px;color:#1f2433;font-weight:normal;">335</div>
<div class="t" style="left:161.40px;width:300px;text-align:center;top:416.67px;font-size:6.47px;line-height:9.06px;color:#1f2433;font-weight:normal;">834</div>
<div class="t" style="left:161.40px;width:300px;text-align:center;top:425.97px;font-size:6.47px;line-height:9.06px;color:#1f2433;font-weight:normal;">288</div>
<div class="t" style="left:174.80px;width:300px;text-align:center;top:425.87px;font-size:6.47px;line-height:9.06px;color:#1f2433;font-weight:normal;">472</div>
<div class="t" style="left:174.80px;width:300px;text-align:center;top:402.47px;font-size:6.47px;line-height:9.06px;color:#1f2433;font-weight:normal;">924</div>
<div class="t" style="left:188.20px;width:300px;text-align:center;top:402.47px;font-size:6.47px;line-height:9.06px;color:#1f2433;font-weight:normal;">928</div>
<div class="t" style="left:200.00px;width:300px;text-align:center;top:415.97px;font-size:6.47px;line-height:9.06px;color:#1f2433;font-weight:normal;">873</div>
<div class="t" style="left:213.40px;width:300px;text-align:center;top:403.27px;font-size:6.47px;line-height:9.06px;color:#1f2433;font-weight:normal;">883</div>
<div class="t" style="left:226.90px;width:300px;text-align:center;top:412.47px;font-size:6.47px;line-height:9.06px;color:#1f2433;font-weight:normal;">516</div>
<div class="t" style="left:226.90px;width:300px;text-align:center;top:423.07px;font-size:6.47px;line-height:9.06px;color:#1f2433;font-weight:normal;">594</div>
<div class="t" style="left:245.00px;width:300px;text-align:center;top:396.97px;font-size:6.47px;line-height:9.06px;color:#1f2433;font-weight:normal;">1,155</div>
<div class="t" style="left:240.30px;width:300px;text-align:center;top:407.27px;font-size:6.47px;line-height:9.06px;color:#1f2433;font-weight:normal;">721</div>
<div class="t" style="left:253.20px;width:300px;text-align:center;top:409.57px;font-size:6.47px;line-height:9.06px;color:#1f2433;font-weight:normal;">666</div>
<div class="t" style="left:278.20px;width:300px;text-align:center;top:404.87px;font-size:6.47px;line-height:9.06px;color:#1f2433;font-weight:normal;">824</div>
<div class="t" style="left:279.00px;width:300px;text-align:center;top:423.07px;font-size:6.47px;line-height:9.06px;color:#1f2433;font-weight:normal;">603</div>
<div class="t" style="left:291.60px;width:300px;text-align:center;top:407.67px;font-size:6.47px;line-height:9.06px;color:#1f2433;font-weight:normal;">707</div>
<div class="t" style="left:292.40px;width:300px;text-align:center;top:417.47px;font-size:6.47px;line-height:9.06px;color:#1f2433;font-weight:normal;">825</div>
<div class="t" style="left:305.00px;width:300px;text-align:center;top:421.97px;font-size:6.47px;line-height:9.06px;color:#1f2433;font-weight:normal;">641</div>
<div class="t" style="left:305.80px;width:300px;text-align:center;top:402.07px;font-size:6.47px;line-height:9.06px;color:#1f2433;font-weight:normal;">923</div>
<div class="t" style="left:318.40px;width:300px;text-align:center;top:402.07px;font-size:6.47px;line-height:9.06px;color:#1f2433;font-weight:normal;">923</div>
<div class="t" style="left:331.00px;width:300px;text-align:center;top:402.07px;font-size:6.47px;line-height:9.06px;color:#1f2433;font-weight:normal;">938</div>
<div class="t" style="left:331.00px;width:300px;text-align:center;top:419.87px;font-size:6.47px;line-height:9.06px;color:#1f2433;font-weight:normal;">711</div>
<div class="t" style="left:344.50px;width:300px;text-align:center;top:415.17px;font-size:6.47px;line-height:9.06px;color:#1f2433;font-weight:normal;">418</div>
<div class="t" style="left:357.50px;width:300px;text-align:center;top:415.17px;font-size:6.47px;line-height:9.06px;color:#1f2433;font-weight:normal;">416</div>
<div class="t" style="left:370.60px;width:300px;text-align:center;top:415.17px;font-size:6.47px;line-height:9.06px;color:#1f2433;font-weight:normal;">417</div>
<div class="t" style="left:357.10px;width:300px;text-align:center;top:427.27px;font-size:6.47px;line-height:9.06px;color:#1f2433;font-weight:normal;">283</div>
<div class="t" style="left:390.30px;width:300px;text-align:center;top:417.17px;font-size:6.47px;line-height:9.06px;color:#1f2433;font-weight:normal;">335</div>
<div class="t" style="left:384.00px;width:300px;text-align:center;top:426.97px;font-size:6.47px;line-height:9.06px;color:#1f2433;font-weight:normal;">397</div>
<div class="t" style="left:397.40px;width:300px;text-align:center;top:426.97px;font-size:6.47px;line-height:9.06px;color:#1f2433;font-weight:normal;">399</div>
<div class="t" style="left:404.20px;width:300px;text-align:center;top:397.77px;font-size:6.47px;line-height:9.06px;color:#1f2433;font-weight:normal;">1,086</div>
<div class="t" style="left:427.40px;width:300px;text-align:center;top:390.67px;font-size:6.47px;line-height:9.06px;color:#1f2433;font-weight:normal;">1,374</div>
<div class="t" style="left:427.40px;width:300px;text-align:center;top:414.37px;font-size:6.47px;line-height:9.06px;color:#1f2433;font-weight:normal;">927</div>
<div class="t" style="left:451.10px;width:300px;text-align:center;top:392.27px;font-size:6.47px;line-height:9.06px;color:#1f2433;font-weight:normal;">1,388</div>
<div class="t" style="left:462.00px;width:300px;text-align:center;top:416.37px;font-size:6.47px;line-height:9.06px;color:#1f2433;font-weight:normal;">827</div>
<div class="t" style="left:475.00px;width:300px;text-align:center;top:407.37px;font-size:6.47px;line-height:9.06px;color:#1f2433;font-weight:normal;">711</div>
<div class="t" style="left:488.60px;width:300px;text-align:center;top:395.37px;font-size:6.47px;line-height:9.06px;color:#1f2433;font-weight:normal;">1,203</div>
<div class="t" style="left:488.00px;width:300px;text-align:center;top:405.77px;font-size:6.47px;line-height:9.06px;color:#1f2433;font-weight:normal;">756</div>
<div class="t" style="left:506.00px;width:300px;text-align:center;top:418.97px;font-size:6.47px;line-height:9.06px;color:#1f2433;font-weight:normal;">758</div>
<div class="t" style="left:515.00px;width:300px;text-align:center;top:407.77px;font-size:6.47px;line-height:9.06px;color:#1f2433;font-weight:normal;">763</div>
<div class="t" style="left:527.00px;width:300px;text-align:center;top:387.37px;font-size:6.47px;line-height:9.06px;color:#1f2433;font-weight:normal;">1,519</div>
<div class="t" style="left:549.00px;width:300px;text-align:center;top:380.37px;font-size:6.47px;line-height:9.06px;color:#1f2433;font-weight:normal;">1,824</div>
<div class="t" style="left:544.00px;width:300px;text-align:center;top:390.37px;font-size:6.47px;line-height:9.06px;color:#1f2433;font-weight:normal;">1,467</div>
<div class="t" style="left:544.00px;width:300px;text-align:center;top:408.97px;font-size:6.47px;line-height:9.06px;color:#1f2433;font-weight:normal;">1,176</div>
<div class="t" style="left:581.00px;width:300px;text-align:center;top:390.97px;font-size:6.47px;line-height:9.06px;color:#1f2433;font-weight:normal;">1,387</div>
<div class="t" style="left:579.40px;width:300px;text-align:center;top:411.77px;font-size:6.47px;line-height:9.06px;color:#1f2433;font-weight:normal;">1,006</div>
<div class="t" style="left:586.60px;width:300px;text-align:center;top:355.37px;font-size:6.47px;line-height:9.06px;color:#1f2433;font-weight:normal;">2,800</div>
<div class="t" style="left:611.40px;width:300px;text-align:center;top:355.37px;font-size:6.47px;line-height:9.06px;color:#1f2433;font-weight:normal;">2,842</div>
<div class="t" style="left:632.30px;width:300px;text-align:center;top:355.37px;font-size:6.47px;line-height:9.06px;color:#1f2433;font-weight:normal;">2,814</div>
<div class="t" style="left:649.00px;width:300px;text-align:center;top:387.37px;font-size:6.47px;line-height:9.06px;color:#1f2433;font-weight:normal;">1,519</div>
<div class="t" style="left:671.40px;width:300px;text-align:center;top:380.37px;font-size:6.47px;line-height:9.06px;color:#1f2433;font-weight:normal;">1,824</div>
<div class="t" style="left:665.00px;width:300px;text-align:center;top:390.37px;font-size:6.47px;line-height:9.06px;color:#1f2433;font-weight:normal;">1,467</div>
<div class="t" style="left:666.00px;width:300px;text-align:center;top:408.97px;font-size:6.47px;line-height:9.06px;color:#1f2433;font-weight:normal;">1,176</div>
<div class="t" style="left:703.00px;width:300px;text-align:center;top:390.97px;font-size:6.47px;line-height:9.06px;color:#1f2433;font-weight:normal;">1,387</div>
<div class="t" style="left:702.00px;width:300px;text-align:center;top:411.77px;font-size:6.47px;line-height:9.06px;color:#1f2433;font-weight:normal;">1,006</div>
<div class="t" style="left:708.50px;width:300px;text-align:center;top:355.37px;font-size:6.47px;line-height:9.06px;color:#1f2433;font-weight:normal;">2,800</div>
<div class="t" style="left:733.30px;width:300px;text-align:center;top:355.37px;font-size:6.47px;line-height:9.06px;color:#1f2433;font-weight:normal;">2,842</div>
<div class="t" style="left:754.20px;width:300px;text-align:center;top:355.37px;font-size:6.47px;line-height:9.06px;color:#1f2433;font-weight:normal;">2,814</div>
<div style="position:absolute;left:1057px;top:0px;width:1px;height:475px;background:#151515"></div>
</body></html>
